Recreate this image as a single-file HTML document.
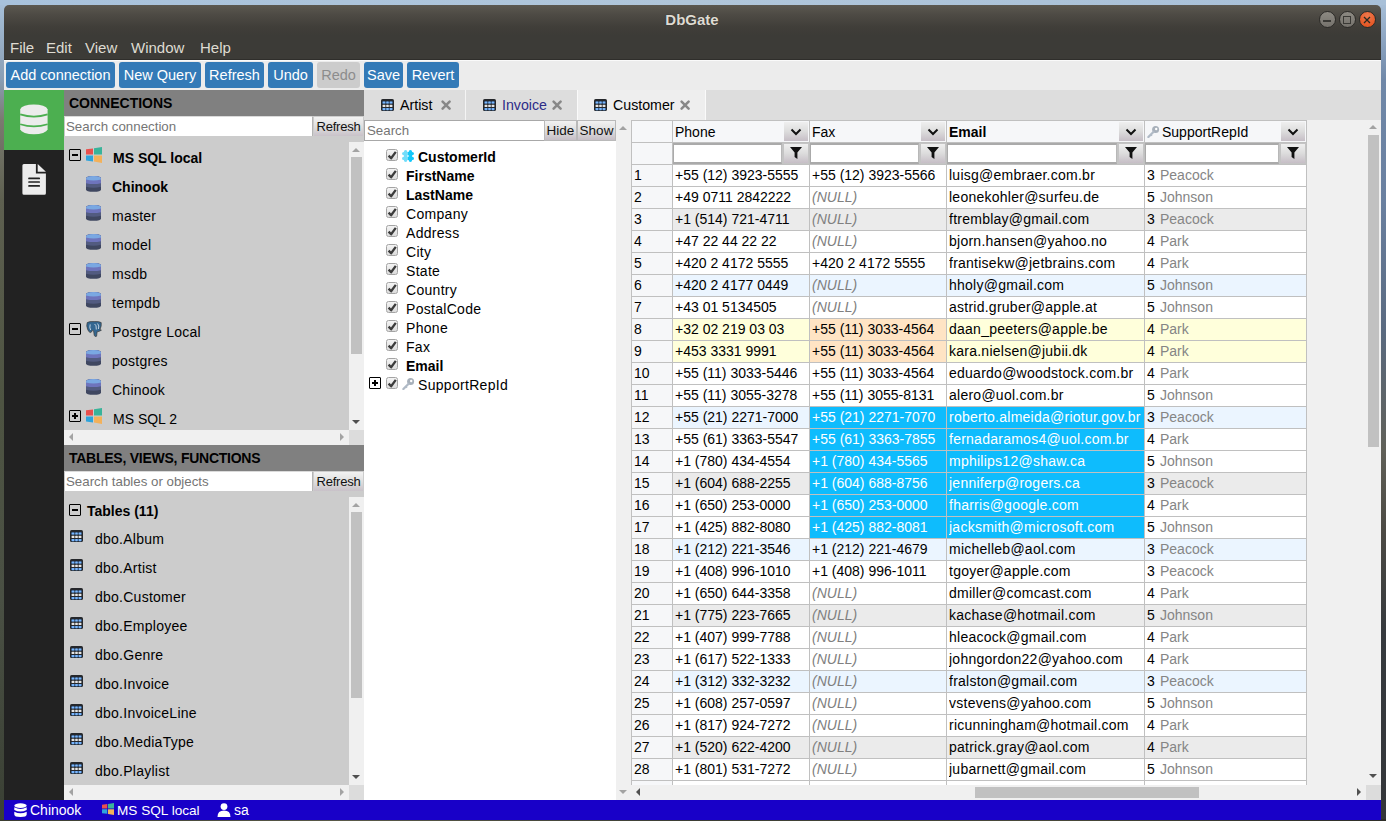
<!DOCTYPE html><html><head><meta charset="utf-8"><style>html,body{margin:0;padding:0;}body{width:1386px;height:821px;overflow:hidden;position:relative;font-family:"Liberation Sans", sans-serif;font-size:14px;background:linear-gradient(180deg,#a9c1da 0px,#9fb7cf 40px,#40463c 140px,#2f3428 500px,#34352c 821px);}div{box-sizing:content-box;}</style></head><body>
<div style="position:absolute;left:1381px;top:0px;width:5px;height:330px;background:linear-gradient(180deg,#a9c1da,#7088a8 80px,#6a80a0 200px,#5a6a80 330px);"></div>
<div style="position:absolute;left:1381px;top:330px;width:5px;height:491px;background:linear-gradient(180deg,#5a6a80,#606058 120px,#4c4a44 200px,#363a3e 300px,#34363a 491px);"></div>
<div style="position:absolute;left:0px;top:0px;width:4px;height:821px;background:linear-gradient(180deg,#a8c2dc 0,#a0b8d0 20px,#8a9eb4 80px,#7a7a70 120px,#5e6050 200px,#4e5442 400px,#4a5044 600px,#3a4034 821px);"></div>
<div style="position:absolute;left:0px;top:819px;width:1386px;height:2px;background:linear-gradient(90deg,#3a3c30,#5a5a48 25%,#3c3e34 50%,#4a4a3a 75%,#2e2e28);"></div>
<div style="position:absolute;left:0px;top:0px;width:1386px;height:5px;background:linear-gradient(90deg,#a8c2dc,#b0c6da 50%,#a8c0d8);"></div>
<div style="position:absolute;left:4px;top:5px;width:1377px;height:30px;background:linear-gradient(180deg,#5b5850 0px,#4d4a44 10px,#403e39 22px,#3c3b37 30px);border-radius:5px 5px 0 0;"></div>
<div style="position:absolute;left:-1px;top:10.04px;height:20px;line-height:20px;font-size:15px;font-weight:bold;color:#dfdbd2;white-space:nowrap;width:1386px;text-align:center;text-shadow:0 0 1px #222;" >DbGate</div>
<div style="position:absolute;left:1318.5px;top:11px;width:15px;height:15px;border-radius:50%;border:1px solid #2c2b28;background:linear-gradient(180deg,#8c8982,#75726c);"></div>
<div style="position:absolute;left:1338.5px;top:11px;width:15px;height:15px;border-radius:50%;border:1px solid #2c2b28;background:linear-gradient(180deg,#8c8982,#75726c);"></div>
<div style="position:absolute;left:1358.5px;top:11px;width:15px;height:15px;border-radius:50%;border:1px solid #2c2b28;background:radial-gradient(circle at 50% 25%,#f0784c,#e65a28 70%,#e0541e);"></div>
<div style="position:absolute;left:1323px;top:20px;width:8px;height:1.6px;background:#3a3935"></div>
<div style="position:absolute;left:1343px;top:16px;width:6px;height:6px;border:1.3px solid #3a3935"></div>
<svg width="10" height="10" style="position:absolute;left:1362px;top:15px"><path d="M2 2 L8 8 M8 2 L2 8" stroke="#2a2a20" stroke-width="1.3"/><circle cx="5" cy="5" r="1" fill="#2a2a20"/></svg>
<div style="position:absolute;left:4px;top:35px;width:1377px;height:25px;background:#3c3b37;"></div>
<div style="position:absolute;left:4px;top:59px;width:1377px;height:1px;background:#2f2e2b;"></div>
<div style="position:absolute;left:10px;top:37.84px;height:20px;line-height:20px;font-size:15px;font-weight:normal;color:#dfdbd2;white-space:nowrap;" >File</div>
<div style="position:absolute;left:46px;top:37.84px;height:20px;line-height:20px;font-size:15px;font-weight:normal;color:#dfdbd2;white-space:nowrap;" >Edit</div>
<div style="position:absolute;left:85px;top:37.84px;height:20px;line-height:20px;font-size:15px;font-weight:normal;color:#dfdbd2;white-space:nowrap;" >View</div>
<div style="position:absolute;left:131px;top:37.84px;height:20px;line-height:20px;font-size:15px;font-weight:normal;color:#dfdbd2;white-space:nowrap;" >Window</div>
<div style="position:absolute;left:200px;top:37.84px;height:20px;line-height:20px;font-size:15px;font-weight:normal;color:#dfdbd2;white-space:nowrap;" >Help</div>
<div style="position:absolute;left:4px;top:60px;width:1377px;height:30px;background:#ececec;border-top:1px solid #fafafa;height:29px;"></div>
<div style="position:absolute;left:6px;top:62px;width:109px;height:26px;background:#337ab7;border-radius:3px;"></div>
<div style="position:absolute;left:6px;top:65.01px;height:20px;line-height:20px;font-size:14.5px;font-weight:normal;color:#ffffff;white-space:nowrap;width:109px;text-align:center;" >Add connection</div>
<div style="position:absolute;left:119px;top:62px;width:82px;height:26px;background:#337ab7;border-radius:3px;"></div>
<div style="position:absolute;left:119px;top:65.01px;height:20px;line-height:20px;font-size:14.5px;font-weight:normal;color:#ffffff;white-space:nowrap;width:82px;text-align:center;" >New Query</div>
<div style="position:absolute;left:205px;top:62px;width:59px;height:26px;background:#337ab7;border-radius:3px;"></div>
<div style="position:absolute;left:205px;top:65.01px;height:20px;line-height:20px;font-size:14.5px;font-weight:normal;color:#ffffff;white-space:nowrap;width:59px;text-align:center;" >Refresh</div>
<div style="position:absolute;left:268px;top:62px;width:45px;height:26px;background:#337ab7;border-radius:3px;"></div>
<div style="position:absolute;left:268px;top:65.01px;height:20px;line-height:20px;font-size:14.5px;font-weight:normal;color:#ffffff;white-space:nowrap;width:45px;text-align:center;" >Undo</div>
<div style="position:absolute;left:317px;top:62px;width:43px;height:26px;background:#cccccc;border-radius:3px;"></div>
<div style="position:absolute;left:317px;top:65.01px;height:20px;line-height:20px;font-size:14.5px;font-weight:normal;color:#8c8c8c;white-space:nowrap;width:43px;text-align:center;" >Redo</div>
<div style="position:absolute;left:364px;top:62px;width:39px;height:26px;background:#337ab7;border-radius:3px;"></div>
<div style="position:absolute;left:364px;top:65.01px;height:20px;line-height:20px;font-size:14.5px;font-weight:normal;color:#ffffff;white-space:nowrap;width:39px;text-align:center;" >Save</div>
<div style="position:absolute;left:407px;top:62px;width:52px;height:26px;background:#337ab7;border-radius:3px;"></div>
<div style="position:absolute;left:407px;top:65.01px;height:20px;line-height:20px;font-size:14.5px;font-weight:normal;color:#ffffff;white-space:nowrap;width:52px;text-align:center;" >Revert</div>
<div style="position:absolute;left:4px;top:90px;width:1377px;height:710px;background:#ececec;"></div>
<div style="position:absolute;left:64px;top:90px;width:300px;height:710px;background:#cccccc;"></div>
<div style="position:absolute;left:4px;top:90px;width:60px;height:710px;background:#222222;"></div>
<div style="position:absolute;left:4px;top:90px;width:60px;height:60px;background:#4caf50;"></div>
<svg width="28" height="33" viewBox="0 0 28 33" style="position:absolute;left:20px;top:103px"><path d="M0.2 6.2 A13.8 5.4 0 0 1 27.6 6.2 L27.6 26.6 A13.8 5.4 0 0 1 0.2 26.6 Z" fill="#ececec"/><path d="M0.2 11.4 Q13.9 15.8 27.6 11.4" stroke="#4caf50" stroke-width="1.7" fill="none"/><path d="M0.2 21.2 Q13.9 25.6 27.6 21.2" stroke="#4caf50" stroke-width="1.7" fill="none"/></svg>
<svg width="26" height="33" viewBox="0 0 26 33" style="position:absolute;left:22px;top:164px"><path d="M0.4 1.5 Q0.4 0 1.9 0 L13.9 0 L13.9 9.6 L23.9 9.6 L23.9 29.3 Q23.9 30.8 22.4 30.8 L1.9 30.8 Q0.4 30.8 0.4 29.3 Z" fill="#ececec"/><path d="M15.7 0 L15.7 7.8 L23.9 7.8 Z" fill="#ececec"/><path d="M7 14.4 L17.2 14.4 M7 18 L17.2 18 M7 21.9 L17.2 21.9" stroke="#222" stroke-width="1.7" stroke-linecap="round"/></svg>
<div style="position:absolute;left:64px;top:90px;width:300px;height:26px;background:#808080;"></div>
<div style="position:absolute;left:69px;top:93.37px;height:20px;line-height:20px;font-size:14px;font-weight:bold;color:#000;white-space:nowrap;" >CONNECTIONS</div>
<div style="position:absolute;left:64px;top:116px;width:247px;height:19px;background:#fff;border:1px solid #b4b4b4;border-top-color:#dadada;border-left-color:#c8c8c8;"></div>
<div style="position:absolute;left:66px;top:116.60px;height:20px;line-height:20px;font-size:13.3px;font-weight:normal;color:#757575;white-space:nowrap;" >Search connection</div>
<div style="position:absolute;left:314px;top:117px;width:49px;height:20px;background:linear-gradient(180deg,#f2f2f2,#dedede 50%,#c6bec6);"></div>
<div style="position:absolute;left:314px;top:116.70px;height:20px;line-height:20px;font-size:13px;font-weight:normal;color:#111;white-space:nowrap;width:49px;text-align:center;letter-spacing:-0.2px;" >Refresh</div>
<div style="position:absolute;left:64px;top:136px;width:300px;height:294px;background:#cccccc;"></div>
<div style="position:absolute;left:69px;top:149px;width:10px;height:10px;border:1px solid #000;border-radius:1px;"><div style="position:absolute;left:2px;top:4px;width:6px;height:2px;background:#000"></div></div>
<svg width="16" height="16" viewBox="0 0 16 16" style="position:absolute;left:86px;top:147px"><path d="M0 2.2 L7 1.4 L7 7.4 L0 7.4 Z" fill="#e8504e"/><path d="M8 1.3 L16 0 L16 7.4 L8 7.4 Z" fill="#39b39a"/><path d="M0 8.4 L7 8.4 L7 14.4 L0 13.6 Z" fill="#2ea3db"/><path d="M8 8.4 L16 8.4 L16 16 L8 14.6 Z" fill="#f3b15a"/></svg>
<div style="position:absolute;left:113px;top:148.37px;height:20px;line-height:20px;font-size:14px;font-weight:bold;color:#000;white-space:nowrap;" >MS SQL local</div>
<svg width="15" height="16" viewBox="0 0 15 16" style="position:absolute;left:85.5px;top:176px"><path d="M0 2.6 Q0 0 7.5 0 Q15 0 15 2.6 L15 13.2 Q15 15.8 7.5 15.8 Q0 15.8 0 13.2 Z" fill="#3f4760"/><path d="M0 2.6 Q0 0 7.5 0 Q15 0 15 2.6 L15 10.8 Q7.5 12.6 0 10.8 Z" fill="#525b80"/><path d="M0 2.6 Q0 0 7.5 0 Q15 0 15 2.6 L15 7.2 Q7.5 9 0 7.2 Z" fill="#6e74bc"/><path d="M0 2.6 Q0 0 7.5 0 Q15 0 15 2.6 L15 3.6 Q7.5 5.6 0 3.6 Z" fill="#7aa8e2"/></svg>
<div style="position:absolute;left:112px;top:177.37px;height:20px;line-height:20px;font-size:14px;font-weight:bold;color:#000;white-space:nowrap;" >Chinook</div>
<svg width="15" height="16" viewBox="0 0 15 16" style="position:absolute;left:85.5px;top:205px"><path d="M0 2.6 Q0 0 7.5 0 Q15 0 15 2.6 L15 13.2 Q15 15.8 7.5 15.8 Q0 15.8 0 13.2 Z" fill="#3f4760"/><path d="M0 2.6 Q0 0 7.5 0 Q15 0 15 2.6 L15 10.8 Q7.5 12.6 0 10.8 Z" fill="#525b80"/><path d="M0 2.6 Q0 0 7.5 0 Q15 0 15 2.6 L15 7.2 Q7.5 9 0 7.2 Z" fill="#6e74bc"/><path d="M0 2.6 Q0 0 7.5 0 Q15 0 15 2.6 L15 3.6 Q7.5 5.6 0 3.6 Z" fill="#7aa8e2"/></svg>
<div style="position:absolute;left:112px;top:206.37px;height:20px;line-height:20px;font-size:14px;font-weight:normal;color:#000;white-space:nowrap;letter-spacing:0.25px;" >master</div>
<svg width="15" height="16" viewBox="0 0 15 16" style="position:absolute;left:85.5px;top:234px"><path d="M0 2.6 Q0 0 7.5 0 Q15 0 15 2.6 L15 13.2 Q15 15.8 7.5 15.8 Q0 15.8 0 13.2 Z" fill="#3f4760"/><path d="M0 2.6 Q0 0 7.5 0 Q15 0 15 2.6 L15 10.8 Q7.5 12.6 0 10.8 Z" fill="#525b80"/><path d="M0 2.6 Q0 0 7.5 0 Q15 0 15 2.6 L15 7.2 Q7.5 9 0 7.2 Z" fill="#6e74bc"/><path d="M0 2.6 Q0 0 7.5 0 Q15 0 15 2.6 L15 3.6 Q7.5 5.6 0 3.6 Z" fill="#7aa8e2"/></svg>
<div style="position:absolute;left:112px;top:235.37px;height:20px;line-height:20px;font-size:14px;font-weight:normal;color:#000;white-space:nowrap;letter-spacing:0.25px;" >model</div>
<svg width="15" height="16" viewBox="0 0 15 16" style="position:absolute;left:85.5px;top:263px"><path d="M0 2.6 Q0 0 7.5 0 Q15 0 15 2.6 L15 13.2 Q15 15.8 7.5 15.8 Q0 15.8 0 13.2 Z" fill="#3f4760"/><path d="M0 2.6 Q0 0 7.5 0 Q15 0 15 2.6 L15 10.8 Q7.5 12.6 0 10.8 Z" fill="#525b80"/><path d="M0 2.6 Q0 0 7.5 0 Q15 0 15 2.6 L15 7.2 Q7.5 9 0 7.2 Z" fill="#6e74bc"/><path d="M0 2.6 Q0 0 7.5 0 Q15 0 15 2.6 L15 3.6 Q7.5 5.6 0 3.6 Z" fill="#7aa8e2"/></svg>
<div style="position:absolute;left:112px;top:264.37px;height:20px;line-height:20px;font-size:14px;font-weight:normal;color:#000;white-space:nowrap;letter-spacing:0.25px;" >msdb</div>
<svg width="15" height="16" viewBox="0 0 15 16" style="position:absolute;left:85.5px;top:292px"><path d="M0 2.6 Q0 0 7.5 0 Q15 0 15 2.6 L15 13.2 Q15 15.8 7.5 15.8 Q0 15.8 0 13.2 Z" fill="#3f4760"/><path d="M0 2.6 Q0 0 7.5 0 Q15 0 15 2.6 L15 10.8 Q7.5 12.6 0 10.8 Z" fill="#525b80"/><path d="M0 2.6 Q0 0 7.5 0 Q15 0 15 2.6 L15 7.2 Q7.5 9 0 7.2 Z" fill="#6e74bc"/><path d="M0 2.6 Q0 0 7.5 0 Q15 0 15 2.6 L15 3.6 Q7.5 5.6 0 3.6 Z" fill="#7aa8e2"/></svg>
<div style="position:absolute;left:112px;top:293.37px;height:20px;line-height:20px;font-size:14px;font-weight:normal;color:#000;white-space:nowrap;letter-spacing:0.25px;" >tempdb</div>
<div style="position:absolute;left:69px;top:323px;width:10px;height:10px;border:1px solid #000;border-radius:1px;"><div style="position:absolute;left:2px;top:4px;width:6px;height:2px;background:#000"></div></div>
<svg width="17" height="17" viewBox="0 0 17 17" style="position:absolute;left:86px;top:321px"><path d="M1.2 1.6 Q0.2 4.5 1.5 8 Q2.5 11 4.2 11.6 Q5.8 11.6 6.3 9.3 L7.6 9.8 L8.2 14.2 Q9 16.3 10.6 15.2 L11.1 10.8 Q13.2 10.6 15.4 9.2 L14 8.6 Q15.8 4.5 15.2 1.6 Q13 0.2 8.2 0.6 Q3.2 0.2 1.2 1.6 Z" fill="#336791" stroke="#3a3a3a" stroke-width="0.7"/><path d="M4.2 3.4 Q3.3 6.5 4.6 9 M8.6 3 Q10.6 3.8 10.3 8.5 M11.6 2.6 Q13.6 4.6 12.4 8" stroke="#e4ecf4" stroke-width="0.8" fill="none"/></svg>
<div style="position:absolute;left:112px;top:322.37px;height:20px;line-height:20px;font-size:14px;font-weight:normal;color:#000;white-space:nowrap;letter-spacing:0.25px;" >Postgre Local</div>
<svg width="15" height="16" viewBox="0 0 15 16" style="position:absolute;left:85.5px;top:350px"><path d="M0 2.6 Q0 0 7.5 0 Q15 0 15 2.6 L15 13.2 Q15 15.8 7.5 15.8 Q0 15.8 0 13.2 Z" fill="#3f4760"/><path d="M0 2.6 Q0 0 7.5 0 Q15 0 15 2.6 L15 10.8 Q7.5 12.6 0 10.8 Z" fill="#525b80"/><path d="M0 2.6 Q0 0 7.5 0 Q15 0 15 2.6 L15 7.2 Q7.5 9 0 7.2 Z" fill="#6e74bc"/><path d="M0 2.6 Q0 0 7.5 0 Q15 0 15 2.6 L15 3.6 Q7.5 5.6 0 3.6 Z" fill="#7aa8e2"/></svg>
<div style="position:absolute;left:112px;top:351.37px;height:20px;line-height:20px;font-size:14px;font-weight:normal;color:#000;white-space:nowrap;letter-spacing:0.25px;" >postgres</div>
<svg width="15" height="16" viewBox="0 0 15 16" style="position:absolute;left:85.5px;top:379px"><path d="M0 2.6 Q0 0 7.5 0 Q15 0 15 2.6 L15 13.2 Q15 15.8 7.5 15.8 Q0 15.8 0 13.2 Z" fill="#3f4760"/><path d="M0 2.6 Q0 0 7.5 0 Q15 0 15 2.6 L15 10.8 Q7.5 12.6 0 10.8 Z" fill="#525b80"/><path d="M0 2.6 Q0 0 7.5 0 Q15 0 15 2.6 L15 7.2 Q7.5 9 0 7.2 Z" fill="#6e74bc"/><path d="M0 2.6 Q0 0 7.5 0 Q15 0 15 2.6 L15 3.6 Q7.5 5.6 0 3.6 Z" fill="#7aa8e2"/></svg>
<div style="position:absolute;left:112px;top:380.37px;height:20px;line-height:20px;font-size:14px;font-weight:normal;color:#000;white-space:nowrap;letter-spacing:0.25px;" >Chinook</div>
<div style="position:absolute;left:69px;top:410px;width:10px;height:10px;border:1px solid #000;border-radius:1px;"><div style="position:absolute;left:2px;top:4px;width:6px;height:2px;background:#000"></div><div style="position:absolute;left:4px;top:2px;width:2px;height:6px;background:#000"></div></div>
<svg width="16" height="16" viewBox="0 0 16 16" style="position:absolute;left:86px;top:408px"><path d="M0 2.2 L7 1.4 L7 7.4 L0 7.4 Z" fill="#e8504e"/><path d="M8 1.3 L16 0 L16 7.4 L8 7.4 Z" fill="#39b39a"/><path d="M0 8.4 L7 8.4 L7 14.4 L0 13.6 Z" fill="#2ea3db"/><path d="M8 8.4 L16 8.4 L16 16 L8 14.6 Z" fill="#f3b15a"/></svg>
<div style="position:absolute;left:113px;top:409.37px;height:20px;line-height:20px;font-size:14px;font-weight:normal;color:#000;white-space:nowrap;" >MS SQL 2</div>
<div style="position:absolute;left:349px;top:142px;width:15px;height:288px;background:#f0f0f0;"></div>
<div style="position:absolute;left:351px;top:157px;width:11px;height:197px;background:#c1c1c1;"></div>
<div style="position:absolute;left:352px;top:148px;width:0px;height:0px;border-left:4px solid transparent;border-right:4px solid transparent;border-bottom:4px solid #a3a3a3;"></div>
<div style="position:absolute;left:352px;top:420px;width:0px;height:0px;border-left:4px solid transparent;border-right:4px solid transparent;border-top:4px solid #505050;"></div>
<div style="position:absolute;left:64px;top:430px;width:285px;height:15px;background:#f0f0f0;"></div>
<div style="position:absolute;left:349px;top:430px;width:15px;height:15px;background:#dcdcdc;"></div>
<div style="position:absolute;left:69px;top:433px;width:0px;height:0px;border-top:4px solid transparent;border-bottom:4px solid transparent;border-right:4px solid #a3a3a3;"></div>
<div style="position:absolute;left:340px;top:433px;width:0px;height:0px;border-top:4px solid transparent;border-bottom:4px solid transparent;border-left:4px solid #a3a3a3;"></div>
<div style="position:absolute;left:64px;top:445px;width:300px;height:26px;background:#808080;"></div>
<div style="position:absolute;left:69px;top:448.37px;height:20px;line-height:20px;font-size:14px;font-weight:bold;color:#000;white-space:nowrap;letter-spacing:-0.25px;" >TABLES, VIEWS, FUNCTIONS</div>
<div style="position:absolute;left:64px;top:471px;width:247px;height:19px;background:#fff;border:1px solid #b4b4b4;border-top-color:#dadada;border-left-color:#c8c8c8;"></div>
<div style="position:absolute;left:66px;top:471.60px;height:20px;line-height:20px;font-size:13.3px;font-weight:normal;color:#757575;white-space:nowrap;" >Search tables or objects</div>
<div style="position:absolute;left:314px;top:472px;width:49px;height:20px;background:linear-gradient(180deg,#f2f2f2,#dedede 50%,#c6bec6);"></div>
<div style="position:absolute;left:314px;top:471.70px;height:20px;line-height:20px;font-size:13px;font-weight:normal;color:#111;white-space:nowrap;width:49px;text-align:center;letter-spacing:-0.2px;" >Refresh</div>
<div style="position:absolute;left:64px;top:491px;width:300px;height:294px;background:#cccccc;"></div>
<div style="position:absolute;left:69px;top:504px;width:10px;height:10px;border:1px solid #000;border-radius:1px;"><div style="position:absolute;left:2px;top:4px;width:6px;height:2px;background:#000"></div></div>
<div style="position:absolute;left:87px;top:501.37px;height:20px;line-height:20px;font-size:14px;font-weight:bold;color:#000;white-space:nowrap;" >Tables (11)</div>
<svg width="13" height="12" viewBox="0 0 13 12" style="position:absolute;left:70px;top:530px"><rect x="0" y="0" width="13" height="12" rx="1.6" fill="#25272b"/><rect x="1" y="2.4" width="11" height="2.2" fill="#34557f"/><rect x="1.8" y="2.4" width="2.4" height="2.2" rx="0.6" fill="#7ab8ff"/><rect x="5.3" y="2.4" width="2.4" height="2.2" rx="0.6" fill="#7ab8ff"/><rect x="8.8" y="2.4" width="2.4" height="2.2" rx="0.6" fill="#7ab8ff"/><rect x="1" y="5.8" width="11" height="2.2" fill="#5c5c5c"/><rect x="1.8" y="5.8" width="2.4" height="2.2" rx="0.6" fill="#e6e6e6"/><rect x="5.3" y="5.8" width="2.4" height="2.2" rx="0.6" fill="#e6e6e6"/><rect x="8.8" y="5.8" width="2.4" height="2.2" rx="0.6" fill="#e6e6e6"/><rect x="1" y="9.0" width="11" height="2.2" fill="#34557f"/><rect x="1.8" y="9.0" width="2.4" height="2.2" rx="0.6" fill="#7ab8ff"/><rect x="5.3" y="9.0" width="2.4" height="2.2" rx="0.6" fill="#7ab8ff"/><rect x="8.8" y="9.0" width="2.4" height="2.2" rx="0.6" fill="#7ab8ff"/></svg>
<div style="position:absolute;left:95px;top:529.37px;height:20px;line-height:20px;font-size:14px;font-weight:normal;color:#000;white-space:nowrap;letter-spacing:0.25px;" >dbo.Album</div>
<svg width="13" height="12" viewBox="0 0 13 12" style="position:absolute;left:70px;top:559px"><rect x="0" y="0" width="13" height="12" rx="1.6" fill="#25272b"/><rect x="1" y="2.4" width="11" height="2.2" fill="#34557f"/><rect x="1.8" y="2.4" width="2.4" height="2.2" rx="0.6" fill="#7ab8ff"/><rect x="5.3" y="2.4" width="2.4" height="2.2" rx="0.6" fill="#7ab8ff"/><rect x="8.8" y="2.4" width="2.4" height="2.2" rx="0.6" fill="#7ab8ff"/><rect x="1" y="5.8" width="11" height="2.2" fill="#5c5c5c"/><rect x="1.8" y="5.8" width="2.4" height="2.2" rx="0.6" fill="#e6e6e6"/><rect x="5.3" y="5.8" width="2.4" height="2.2" rx="0.6" fill="#e6e6e6"/><rect x="8.8" y="5.8" width="2.4" height="2.2" rx="0.6" fill="#e6e6e6"/><rect x="1" y="9.0" width="11" height="2.2" fill="#34557f"/><rect x="1.8" y="9.0" width="2.4" height="2.2" rx="0.6" fill="#7ab8ff"/><rect x="5.3" y="9.0" width="2.4" height="2.2" rx="0.6" fill="#7ab8ff"/><rect x="8.8" y="9.0" width="2.4" height="2.2" rx="0.6" fill="#7ab8ff"/></svg>
<div style="position:absolute;left:95px;top:558.37px;height:20px;line-height:20px;font-size:14px;font-weight:normal;color:#000;white-space:nowrap;letter-spacing:0.25px;" >dbo.Artist</div>
<svg width="13" height="12" viewBox="0 0 13 12" style="position:absolute;left:70px;top:588px"><rect x="0" y="0" width="13" height="12" rx="1.6" fill="#25272b"/><rect x="1" y="2.4" width="11" height="2.2" fill="#34557f"/><rect x="1.8" y="2.4" width="2.4" height="2.2" rx="0.6" fill="#7ab8ff"/><rect x="5.3" y="2.4" width="2.4" height="2.2" rx="0.6" fill="#7ab8ff"/><rect x="8.8" y="2.4" width="2.4" height="2.2" rx="0.6" fill="#7ab8ff"/><rect x="1" y="5.8" width="11" height="2.2" fill="#5c5c5c"/><rect x="1.8" y="5.8" width="2.4" height="2.2" rx="0.6" fill="#e6e6e6"/><rect x="5.3" y="5.8" width="2.4" height="2.2" rx="0.6" fill="#e6e6e6"/><rect x="8.8" y="5.8" width="2.4" height="2.2" rx="0.6" fill="#e6e6e6"/><rect x="1" y="9.0" width="11" height="2.2" fill="#34557f"/><rect x="1.8" y="9.0" width="2.4" height="2.2" rx="0.6" fill="#7ab8ff"/><rect x="5.3" y="9.0" width="2.4" height="2.2" rx="0.6" fill="#7ab8ff"/><rect x="8.8" y="9.0" width="2.4" height="2.2" rx="0.6" fill="#7ab8ff"/></svg>
<div style="position:absolute;left:95px;top:587.37px;height:20px;line-height:20px;font-size:14px;font-weight:normal;color:#000;white-space:nowrap;letter-spacing:0.25px;" >dbo.Customer</div>
<svg width="13" height="12" viewBox="0 0 13 12" style="position:absolute;left:70px;top:617px"><rect x="0" y="0" width="13" height="12" rx="1.6" fill="#25272b"/><rect x="1" y="2.4" width="11" height="2.2" fill="#34557f"/><rect x="1.8" y="2.4" width="2.4" height="2.2" rx="0.6" fill="#7ab8ff"/><rect x="5.3" y="2.4" width="2.4" height="2.2" rx="0.6" fill="#7ab8ff"/><rect x="8.8" y="2.4" width="2.4" height="2.2" rx="0.6" fill="#7ab8ff"/><rect x="1" y="5.8" width="11" height="2.2" fill="#5c5c5c"/><rect x="1.8" y="5.8" width="2.4" height="2.2" rx="0.6" fill="#e6e6e6"/><rect x="5.3" y="5.8" width="2.4" height="2.2" rx="0.6" fill="#e6e6e6"/><rect x="8.8" y="5.8" width="2.4" height="2.2" rx="0.6" fill="#e6e6e6"/><rect x="1" y="9.0" width="11" height="2.2" fill="#34557f"/><rect x="1.8" y="9.0" width="2.4" height="2.2" rx="0.6" fill="#7ab8ff"/><rect x="5.3" y="9.0" width="2.4" height="2.2" rx="0.6" fill="#7ab8ff"/><rect x="8.8" y="9.0" width="2.4" height="2.2" rx="0.6" fill="#7ab8ff"/></svg>
<div style="position:absolute;left:95px;top:616.37px;height:20px;line-height:20px;font-size:14px;font-weight:normal;color:#000;white-space:nowrap;letter-spacing:0.25px;" >dbo.Employee</div>
<svg width="13" height="12" viewBox="0 0 13 12" style="position:absolute;left:70px;top:646px"><rect x="0" y="0" width="13" height="12" rx="1.6" fill="#25272b"/><rect x="1" y="2.4" width="11" height="2.2" fill="#34557f"/><rect x="1.8" y="2.4" width="2.4" height="2.2" rx="0.6" fill="#7ab8ff"/><rect x="5.3" y="2.4" width="2.4" height="2.2" rx="0.6" fill="#7ab8ff"/><rect x="8.8" y="2.4" width="2.4" height="2.2" rx="0.6" fill="#7ab8ff"/><rect x="1" y="5.8" width="11" height="2.2" fill="#5c5c5c"/><rect x="1.8" y="5.8" width="2.4" height="2.2" rx="0.6" fill="#e6e6e6"/><rect x="5.3" y="5.8" width="2.4" height="2.2" rx="0.6" fill="#e6e6e6"/><rect x="8.8" y="5.8" width="2.4" height="2.2" rx="0.6" fill="#e6e6e6"/><rect x="1" y="9.0" width="11" height="2.2" fill="#34557f"/><rect x="1.8" y="9.0" width="2.4" height="2.2" rx="0.6" fill="#7ab8ff"/><rect x="5.3" y="9.0" width="2.4" height="2.2" rx="0.6" fill="#7ab8ff"/><rect x="8.8" y="9.0" width="2.4" height="2.2" rx="0.6" fill="#7ab8ff"/></svg>
<div style="position:absolute;left:95px;top:645.37px;height:20px;line-height:20px;font-size:14px;font-weight:normal;color:#000;white-space:nowrap;letter-spacing:0.25px;" >dbo.Genre</div>
<svg width="13" height="12" viewBox="0 0 13 12" style="position:absolute;left:70px;top:675px"><rect x="0" y="0" width="13" height="12" rx="1.6" fill="#25272b"/><rect x="1" y="2.4" width="11" height="2.2" fill="#34557f"/><rect x="1.8" y="2.4" width="2.4" height="2.2" rx="0.6" fill="#7ab8ff"/><rect x="5.3" y="2.4" width="2.4" height="2.2" rx="0.6" fill="#7ab8ff"/><rect x="8.8" y="2.4" width="2.4" height="2.2" rx="0.6" fill="#7ab8ff"/><rect x="1" y="5.8" width="11" height="2.2" fill="#5c5c5c"/><rect x="1.8" y="5.8" width="2.4" height="2.2" rx="0.6" fill="#e6e6e6"/><rect x="5.3" y="5.8" width="2.4" height="2.2" rx="0.6" fill="#e6e6e6"/><rect x="8.8" y="5.8" width="2.4" height="2.2" rx="0.6" fill="#e6e6e6"/><rect x="1" y="9.0" width="11" height="2.2" fill="#34557f"/><rect x="1.8" y="9.0" width="2.4" height="2.2" rx="0.6" fill="#7ab8ff"/><rect x="5.3" y="9.0" width="2.4" height="2.2" rx="0.6" fill="#7ab8ff"/><rect x="8.8" y="9.0" width="2.4" height="2.2" rx="0.6" fill="#7ab8ff"/></svg>
<div style="position:absolute;left:95px;top:674.37px;height:20px;line-height:20px;font-size:14px;font-weight:normal;color:#000;white-space:nowrap;letter-spacing:0.25px;" >dbo.Invoice</div>
<svg width="13" height="12" viewBox="0 0 13 12" style="position:absolute;left:70px;top:704px"><rect x="0" y="0" width="13" height="12" rx="1.6" fill="#25272b"/><rect x="1" y="2.4" width="11" height="2.2" fill="#34557f"/><rect x="1.8" y="2.4" width="2.4" height="2.2" rx="0.6" fill="#7ab8ff"/><rect x="5.3" y="2.4" width="2.4" height="2.2" rx="0.6" fill="#7ab8ff"/><rect x="8.8" y="2.4" width="2.4" height="2.2" rx="0.6" fill="#7ab8ff"/><rect x="1" y="5.8" width="11" height="2.2" fill="#5c5c5c"/><rect x="1.8" y="5.8" width="2.4" height="2.2" rx="0.6" fill="#e6e6e6"/><rect x="5.3" y="5.8" width="2.4" height="2.2" rx="0.6" fill="#e6e6e6"/><rect x="8.8" y="5.8" width="2.4" height="2.2" rx="0.6" fill="#e6e6e6"/><rect x="1" y="9.0" width="11" height="2.2" fill="#34557f"/><rect x="1.8" y="9.0" width="2.4" height="2.2" rx="0.6" fill="#7ab8ff"/><rect x="5.3" y="9.0" width="2.4" height="2.2" rx="0.6" fill="#7ab8ff"/><rect x="8.8" y="9.0" width="2.4" height="2.2" rx="0.6" fill="#7ab8ff"/></svg>
<div style="position:absolute;left:95px;top:703.37px;height:20px;line-height:20px;font-size:14px;font-weight:normal;color:#000;white-space:nowrap;letter-spacing:0.25px;" >dbo.InvoiceLine</div>
<svg width="13" height="12" viewBox="0 0 13 12" style="position:absolute;left:70px;top:733px"><rect x="0" y="0" width="13" height="12" rx="1.6" fill="#25272b"/><rect x="1" y="2.4" width="11" height="2.2" fill="#34557f"/><rect x="1.8" y="2.4" width="2.4" height="2.2" rx="0.6" fill="#7ab8ff"/><rect x="5.3" y="2.4" width="2.4" height="2.2" rx="0.6" fill="#7ab8ff"/><rect x="8.8" y="2.4" width="2.4" height="2.2" rx="0.6" fill="#7ab8ff"/><rect x="1" y="5.8" width="11" height="2.2" fill="#5c5c5c"/><rect x="1.8" y="5.8" width="2.4" height="2.2" rx="0.6" fill="#e6e6e6"/><rect x="5.3" y="5.8" width="2.4" height="2.2" rx="0.6" fill="#e6e6e6"/><rect x="8.8" y="5.8" width="2.4" height="2.2" rx="0.6" fill="#e6e6e6"/><rect x="1" y="9.0" width="11" height="2.2" fill="#34557f"/><rect x="1.8" y="9.0" width="2.4" height="2.2" rx="0.6" fill="#7ab8ff"/><rect x="5.3" y="9.0" width="2.4" height="2.2" rx="0.6" fill="#7ab8ff"/><rect x="8.8" y="9.0" width="2.4" height="2.2" rx="0.6" fill="#7ab8ff"/></svg>
<div style="position:absolute;left:95px;top:732.37px;height:20px;line-height:20px;font-size:14px;font-weight:normal;color:#000;white-space:nowrap;letter-spacing:0.25px;" >dbo.MediaType</div>
<svg width="13" height="12" viewBox="0 0 13 12" style="position:absolute;left:70px;top:762px"><rect x="0" y="0" width="13" height="12" rx="1.6" fill="#25272b"/><rect x="1" y="2.4" width="11" height="2.2" fill="#34557f"/><rect x="1.8" y="2.4" width="2.4" height="2.2" rx="0.6" fill="#7ab8ff"/><rect x="5.3" y="2.4" width="2.4" height="2.2" rx="0.6" fill="#7ab8ff"/><rect x="8.8" y="2.4" width="2.4" height="2.2" rx="0.6" fill="#7ab8ff"/><rect x="1" y="5.8" width="11" height="2.2" fill="#5c5c5c"/><rect x="1.8" y="5.8" width="2.4" height="2.2" rx="0.6" fill="#e6e6e6"/><rect x="5.3" y="5.8" width="2.4" height="2.2" rx="0.6" fill="#e6e6e6"/><rect x="8.8" y="5.8" width="2.4" height="2.2" rx="0.6" fill="#e6e6e6"/><rect x="1" y="9.0" width="11" height="2.2" fill="#34557f"/><rect x="1.8" y="9.0" width="2.4" height="2.2" rx="0.6" fill="#7ab8ff"/><rect x="5.3" y="9.0" width="2.4" height="2.2" rx="0.6" fill="#7ab8ff"/><rect x="8.8" y="9.0" width="2.4" height="2.2" rx="0.6" fill="#7ab8ff"/></svg>
<div style="position:absolute;left:95px;top:761.37px;height:20px;line-height:20px;font-size:14px;font-weight:normal;color:#000;white-space:nowrap;letter-spacing:0.25px;" >dbo.Playlist</div>
<div style="position:absolute;left:349px;top:497px;width:15px;height:288px;background:#f0f0f0;"></div>
<div style="position:absolute;left:351px;top:512px;width:11px;height:186px;background:#c1c1c1;"></div>
<div style="position:absolute;left:352px;top:503px;width:0px;height:0px;border-left:4px solid transparent;border-right:4px solid transparent;border-bottom:4px solid #a3a3a3;"></div>
<div style="position:absolute;left:352px;top:775px;width:0px;height:0px;border-left:4px solid transparent;border-right:4px solid transparent;border-top:4px solid #505050;"></div>
<div style="position:absolute;left:64px;top:785px;width:285px;height:15px;background:#f0f0f0;"></div>
<div style="position:absolute;left:349px;top:785px;width:15px;height:15px;background:#dcdcdc;"></div>
<div style="position:absolute;left:69px;top:788px;width:0px;height:0px;border-top:4px solid transparent;border-bottom:4px solid transparent;border-right:4px solid #a3a3a3;"></div>
<div style="position:absolute;left:340px;top:788px;width:0px;height:0px;border-top:4px solid transparent;border-bottom:4px solid transparent;border-left:4px solid #a3a3a3;"></div>
<div style="position:absolute;left:364px;top:90px;width:1017px;height:30px;background:#dddddd;"></div>
<div style="position:absolute;left:364px;top:90px;width:101px;height:30px;background:#dddddd;"></div>
<svg width="13" height="12" viewBox="0 0 13 12" style="position:absolute;left:381px;top:99px"><rect x="0" y="0" width="13" height="12" rx="1.6" fill="#25272b"/><rect x="1" y="2.4" width="11" height="2.2" fill="#34557f"/><rect x="1.8" y="2.4" width="2.4" height="2.2" rx="0.6" fill="#7ab8ff"/><rect x="5.3" y="2.4" width="2.4" height="2.2" rx="0.6" fill="#7ab8ff"/><rect x="8.8" y="2.4" width="2.4" height="2.2" rx="0.6" fill="#7ab8ff"/><rect x="1" y="5.8" width="11" height="2.2" fill="#5c5c5c"/><rect x="1.8" y="5.8" width="2.4" height="2.2" rx="0.6" fill="#e6e6e6"/><rect x="5.3" y="5.8" width="2.4" height="2.2" rx="0.6" fill="#e6e6e6"/><rect x="8.8" y="5.8" width="2.4" height="2.2" rx="0.6" fill="#e6e6e6"/><rect x="1" y="9.0" width="11" height="2.2" fill="#34557f"/><rect x="1.8" y="9.0" width="2.4" height="2.2" rx="0.6" fill="#7ab8ff"/><rect x="5.3" y="9.0" width="2.4" height="2.2" rx="0.6" fill="#7ab8ff"/><rect x="8.8" y="9.0" width="2.4" height="2.2" rx="0.6" fill="#7ab8ff"/></svg>
<div style="position:absolute;left:400px;top:95.31px;height:20px;line-height:20px;font-size:14.2px;font-weight:normal;color:#000;white-space:nowrap;" >Artist</div>
<div style="position:absolute;left:466px;top:90px;width:111px;height:30px;background:#dddddd;"></div>
<svg width="13" height="12" viewBox="0 0 13 12" style="position:absolute;left:483px;top:99px"><rect x="0" y="0" width="13" height="12" rx="1.6" fill="#25272b"/><rect x="1" y="2.4" width="11" height="2.2" fill="#34557f"/><rect x="1.8" y="2.4" width="2.4" height="2.2" rx="0.6" fill="#7ab8ff"/><rect x="5.3" y="2.4" width="2.4" height="2.2" rx="0.6" fill="#7ab8ff"/><rect x="8.8" y="2.4" width="2.4" height="2.2" rx="0.6" fill="#7ab8ff"/><rect x="1" y="5.8" width="11" height="2.2" fill="#5c5c5c"/><rect x="1.8" y="5.8" width="2.4" height="2.2" rx="0.6" fill="#e6e6e6"/><rect x="5.3" y="5.8" width="2.4" height="2.2" rx="0.6" fill="#e6e6e6"/><rect x="8.8" y="5.8" width="2.4" height="2.2" rx="0.6" fill="#e6e6e6"/><rect x="1" y="9.0" width="11" height="2.2" fill="#34557f"/><rect x="1.8" y="9.0" width="2.4" height="2.2" rx="0.6" fill="#7ab8ff"/><rect x="5.3" y="9.0" width="2.4" height="2.2" rx="0.6" fill="#7ab8ff"/><rect x="8.8" y="9.0" width="2.4" height="2.2" rx="0.6" fill="#7ab8ff"/></svg>
<div style="position:absolute;left:502px;top:95.31px;height:20px;line-height:20px;font-size:14.2px;font-weight:normal;color:#2e2c88;white-space:nowrap;" >Invoice</div>
<div style="position:absolute;left:577px;top:90px;width:128px;height:30px;background:#eeeeee;"></div>
<svg width="13" height="12" viewBox="0 0 13 12" style="position:absolute;left:594px;top:99px"><rect x="0" y="0" width="13" height="12" rx="1.6" fill="#25272b"/><rect x="1" y="2.4" width="11" height="2.2" fill="#34557f"/><rect x="1.8" y="2.4" width="2.4" height="2.2" rx="0.6" fill="#7ab8ff"/><rect x="5.3" y="2.4" width="2.4" height="2.2" rx="0.6" fill="#7ab8ff"/><rect x="8.8" y="2.4" width="2.4" height="2.2" rx="0.6" fill="#7ab8ff"/><rect x="1" y="5.8" width="11" height="2.2" fill="#5c5c5c"/><rect x="1.8" y="5.8" width="2.4" height="2.2" rx="0.6" fill="#e6e6e6"/><rect x="5.3" y="5.8" width="2.4" height="2.2" rx="0.6" fill="#e6e6e6"/><rect x="8.8" y="5.8" width="2.4" height="2.2" rx="0.6" fill="#e6e6e6"/><rect x="1" y="9.0" width="11" height="2.2" fill="#34557f"/><rect x="1.8" y="9.0" width="2.4" height="2.2" rx="0.6" fill="#7ab8ff"/><rect x="5.3" y="9.0" width="2.4" height="2.2" rx="0.6" fill="#7ab8ff"/><rect x="8.8" y="9.0" width="2.4" height="2.2" rx="0.6" fill="#7ab8ff"/></svg>
<div style="position:absolute;left:613px;top:95.31px;height:20px;line-height:20px;font-size:14.2px;font-weight:normal;color:#000;white-space:nowrap;" >Customer</div>
<svg width="11" height="11" viewBox="0 0 11 11" style="position:absolute;left:441px;top:100px"><path d="M1.6 1.6 L8.6 8.6 M8.6 1.6 L1.6 8.6" stroke="#888" stroke-width="2.5" stroke-linecap="round"/></svg>
<svg width="11" height="11" viewBox="0 0 11 11" style="position:absolute;left:552px;top:100px"><path d="M1.6 1.6 L8.6 8.6 M8.6 1.6 L1.6 8.6" stroke="#888" stroke-width="2.5" stroke-linecap="round"/></svg>
<svg width="11" height="11" viewBox="0 0 11 11" style="position:absolute;left:680px;top:100px"><path d="M1.6 1.6 L8.6 8.6 M8.6 1.6 L1.6 8.6" stroke="#888" stroke-width="2.5" stroke-linecap="round"/></svg>
<div style="position:absolute;left:465px;top:90px;width:1px;height:30px;background:#f4f4f4;"></div>
<div style="position:absolute;left:705px;top:90px;width:1px;height:30px;background:#fafafa;"></div>
<div style="position:absolute;left:577px;top:90px;width:1px;height:30px;background:#fafafa;"></div>
<div style="position:absolute;left:364px;top:120px;width:252px;height:680px;background:#ffffff;"></div>
<div style="position:absolute;left:364px;top:120px;width:179px;height:19px;background:#fff;border:1px solid #a8a8a8;"></div>
<div style="position:absolute;left:367px;top:120.60px;height:20px;line-height:20px;font-size:13.3px;font-weight:normal;color:#757575;white-space:nowrap;" >Search</div>
<div style="position:absolute;left:544px;top:120px;width:31px;height:19px;background:linear-gradient(180deg,#f2f2f2,#dedede 50%,#c6bec6);border:1px solid #b9b9b9;"></div>
<div style="position:absolute;left:544px;top:120.54px;height:20px;line-height:20px;font-size:13.5px;font-weight:normal;color:#111;white-space:nowrap;width:33px;text-align:center;" >Hide</div>
<div style="position:absolute;left:577px;top:120px;width:37px;height:19px;background:linear-gradient(180deg,#f2f2f2,#dedede 50%,#c6bec6);border:1px solid #b9b9b9;"></div>
<div style="position:absolute;left:577px;top:120.54px;height:20px;line-height:20px;font-size:13.5px;font-weight:normal;color:#111;white-space:nowrap;width:39px;text-align:center;" >Show</div>
<div style="position:absolute;left:616px;top:120px;width:15px;height:680px;background:#f0f0f0;"></div>
<div style="position:absolute;left:619px;top:126px;width:0px;height:0px;border-left:4px solid transparent;border-right:4px solid transparent;border-bottom:4px solid #a3a3a3;"></div>
<div style="position:absolute;left:619px;top:790px;width:0px;height:0px;border-left:4px solid transparent;border-right:4px solid transparent;border-top:4px solid #a3a3a3;"></div>
<div style="position:absolute;left:386px;top:149px;width:10px;height:10px;border:1px solid #a4a4a4;border-radius:2.5px;background:linear-gradient(180deg,#f4f4f4,#dcdcdc);"></div>
<svg width="10" height="10" viewBox="0 0 10 10" style="position:absolute;left:387px;top:150px"><path d="M1.6 5.6 L4.1 8.3 L8.8 1.9" stroke="#3c3c3c" stroke-width="2.3" fill="none" stroke-linejoin="round"/></svg>
<svg width="13" height="13" viewBox="0 0 13 13" style="position:absolute;left:402px;top:150px"><defs><linearGradient id="pkg" x1="0" x2="1" y1="0" y2="0"><stop offset="0.5" stop-color="#72ddfa"/><stop offset="0.5" stop-color="#14c8fa"/></linearGradient></defs><path d="M3.6 1.7 L3.6 10.3 M8.4 1.7 L8.4 10.3 M1.7 3.6 L10.3 3.6 M1.7 8.4 L10.3 8.4" stroke="url(#pkg)" stroke-width="3.4" stroke-linecap="round"/></svg>
<div style="position:absolute;left:418px;top:147.37px;height:20px;line-height:20px;font-size:14px;font-weight:bold;color:#000;white-space:nowrap;" >CustomerId</div>
<div style="position:absolute;left:386px;top:168px;width:10px;height:10px;border:1px solid #a4a4a4;border-radius:2.5px;background:linear-gradient(180deg,#f4f4f4,#dcdcdc);"></div>
<svg width="10" height="10" viewBox="0 0 10 10" style="position:absolute;left:387px;top:169px"><path d="M1.6 5.6 L4.1 8.3 L8.8 1.9" stroke="#3c3c3c" stroke-width="2.3" fill="none" stroke-linejoin="round"/></svg>
<div style="position:absolute;left:406px;top:166.37px;height:20px;line-height:20px;font-size:14px;font-weight:bold;color:#000;white-space:nowrap;" >FirstName</div>
<div style="position:absolute;left:386px;top:187px;width:10px;height:10px;border:1px solid #a4a4a4;border-radius:2.5px;background:linear-gradient(180deg,#f4f4f4,#dcdcdc);"></div>
<svg width="10" height="10" viewBox="0 0 10 10" style="position:absolute;left:387px;top:188px"><path d="M1.6 5.6 L4.1 8.3 L8.8 1.9" stroke="#3c3c3c" stroke-width="2.3" fill="none" stroke-linejoin="round"/></svg>
<div style="position:absolute;left:406px;top:185.37px;height:20px;line-height:20px;font-size:14px;font-weight:bold;color:#000;white-space:nowrap;" >LastName</div>
<div style="position:absolute;left:386px;top:206px;width:10px;height:10px;border:1px solid #a4a4a4;border-radius:2.5px;background:linear-gradient(180deg,#f4f4f4,#dcdcdc);"></div>
<svg width="10" height="10" viewBox="0 0 10 10" style="position:absolute;left:387px;top:207px"><path d="M1.6 5.6 L4.1 8.3 L8.8 1.9" stroke="#3c3c3c" stroke-width="2.3" fill="none" stroke-linejoin="round"/></svg>
<div style="position:absolute;left:406px;top:204.37px;height:20px;line-height:20px;font-size:14px;font-weight:normal;color:#000;white-space:nowrap;letter-spacing:0.3px;" >Company</div>
<div style="position:absolute;left:386px;top:225px;width:10px;height:10px;border:1px solid #a4a4a4;border-radius:2.5px;background:linear-gradient(180deg,#f4f4f4,#dcdcdc);"></div>
<svg width="10" height="10" viewBox="0 0 10 10" style="position:absolute;left:387px;top:226px"><path d="M1.6 5.6 L4.1 8.3 L8.8 1.9" stroke="#3c3c3c" stroke-width="2.3" fill="none" stroke-linejoin="round"/></svg>
<div style="position:absolute;left:406px;top:223.37px;height:20px;line-height:20px;font-size:14px;font-weight:normal;color:#000;white-space:nowrap;letter-spacing:0.3px;" >Address</div>
<div style="position:absolute;left:386px;top:244px;width:10px;height:10px;border:1px solid #a4a4a4;border-radius:2.5px;background:linear-gradient(180deg,#f4f4f4,#dcdcdc);"></div>
<svg width="10" height="10" viewBox="0 0 10 10" style="position:absolute;left:387px;top:245px"><path d="M1.6 5.6 L4.1 8.3 L8.8 1.9" stroke="#3c3c3c" stroke-width="2.3" fill="none" stroke-linejoin="round"/></svg>
<div style="position:absolute;left:406px;top:242.37px;height:20px;line-height:20px;font-size:14px;font-weight:normal;color:#000;white-space:nowrap;letter-spacing:0.3px;" >City</div>
<div style="position:absolute;left:386px;top:263px;width:10px;height:10px;border:1px solid #a4a4a4;border-radius:2.5px;background:linear-gradient(180deg,#f4f4f4,#dcdcdc);"></div>
<svg width="10" height="10" viewBox="0 0 10 10" style="position:absolute;left:387px;top:264px"><path d="M1.6 5.6 L4.1 8.3 L8.8 1.9" stroke="#3c3c3c" stroke-width="2.3" fill="none" stroke-linejoin="round"/></svg>
<div style="position:absolute;left:406px;top:261.37px;height:20px;line-height:20px;font-size:14px;font-weight:normal;color:#000;white-space:nowrap;letter-spacing:0.3px;" >State</div>
<div style="position:absolute;left:386px;top:282px;width:10px;height:10px;border:1px solid #a4a4a4;border-radius:2.5px;background:linear-gradient(180deg,#f4f4f4,#dcdcdc);"></div>
<svg width="10" height="10" viewBox="0 0 10 10" style="position:absolute;left:387px;top:283px"><path d="M1.6 5.6 L4.1 8.3 L8.8 1.9" stroke="#3c3c3c" stroke-width="2.3" fill="none" stroke-linejoin="round"/></svg>
<div style="position:absolute;left:406px;top:280.37px;height:20px;line-height:20px;font-size:14px;font-weight:normal;color:#000;white-space:nowrap;letter-spacing:0.3px;" >Country</div>
<div style="position:absolute;left:386px;top:301px;width:10px;height:10px;border:1px solid #a4a4a4;border-radius:2.5px;background:linear-gradient(180deg,#f4f4f4,#dcdcdc);"></div>
<svg width="10" height="10" viewBox="0 0 10 10" style="position:absolute;left:387px;top:302px"><path d="M1.6 5.6 L4.1 8.3 L8.8 1.9" stroke="#3c3c3c" stroke-width="2.3" fill="none" stroke-linejoin="round"/></svg>
<div style="position:absolute;left:406px;top:299.37px;height:20px;line-height:20px;font-size:14px;font-weight:normal;color:#000;white-space:nowrap;letter-spacing:0.3px;" >PostalCode</div>
<div style="position:absolute;left:386px;top:320px;width:10px;height:10px;border:1px solid #a4a4a4;border-radius:2.5px;background:linear-gradient(180deg,#f4f4f4,#dcdcdc);"></div>
<svg width="10" height="10" viewBox="0 0 10 10" style="position:absolute;left:387px;top:321px"><path d="M1.6 5.6 L4.1 8.3 L8.8 1.9" stroke="#3c3c3c" stroke-width="2.3" fill="none" stroke-linejoin="round"/></svg>
<div style="position:absolute;left:406px;top:318.37px;height:20px;line-height:20px;font-size:14px;font-weight:normal;color:#000;white-space:nowrap;letter-spacing:0.3px;" >Phone</div>
<div style="position:absolute;left:386px;top:339px;width:10px;height:10px;border:1px solid #a4a4a4;border-radius:2.5px;background:linear-gradient(180deg,#f4f4f4,#dcdcdc);"></div>
<svg width="10" height="10" viewBox="0 0 10 10" style="position:absolute;left:387px;top:340px"><path d="M1.6 5.6 L4.1 8.3 L8.8 1.9" stroke="#3c3c3c" stroke-width="2.3" fill="none" stroke-linejoin="round"/></svg>
<div style="position:absolute;left:406px;top:337.37px;height:20px;line-height:20px;font-size:14px;font-weight:normal;color:#000;white-space:nowrap;letter-spacing:0.3px;" >Fax</div>
<div style="position:absolute;left:386px;top:358px;width:10px;height:10px;border:1px solid #a4a4a4;border-radius:2.5px;background:linear-gradient(180deg,#f4f4f4,#dcdcdc);"></div>
<svg width="10" height="10" viewBox="0 0 10 10" style="position:absolute;left:387px;top:359px"><path d="M1.6 5.6 L4.1 8.3 L8.8 1.9" stroke="#3c3c3c" stroke-width="2.3" fill="none" stroke-linejoin="round"/></svg>
<div style="position:absolute;left:406px;top:356.37px;height:20px;line-height:20px;font-size:14px;font-weight:bold;color:#000;white-space:nowrap;" >Email</div>
<div style="position:absolute;left:386px;top:377px;width:10px;height:10px;border:1px solid #a4a4a4;border-radius:2.5px;background:linear-gradient(180deg,#f4f4f4,#dcdcdc);"></div>
<svg width="10" height="10" viewBox="0 0 10 10" style="position:absolute;left:387px;top:378px"><path d="M1.6 5.6 L4.1 8.3 L8.8 1.9" stroke="#3c3c3c" stroke-width="2.3" fill="none" stroke-linejoin="round"/></svg>
<svg width="13" height="13" viewBox="0 0 13 13" style="position:absolute;left:402px;top:377px"><circle cx="8.6" cy="4.6" r="3.5" fill="#a7b0ba"/><circle cx="9.2" cy="4" r="1.2" fill="#fff"/><path d="M6.4 7 L1.4 12" stroke="#b0bac6" stroke-width="2.3" stroke-linecap="round"/><path d="M3.8 9.6 L5 10.8" stroke="#b0bac6" stroke-width="1.4"/></svg>
<div style="position:absolute;left:369px;top:377px;width:10px;height:10px;border:1px solid #000;border-radius:1px;"><div style="position:absolute;left:2px;top:4px;width:6px;height:2px;background:#000"></div><div style="position:absolute;left:4px;top:2px;width:2px;height:6px;background:#000"></div></div>
<div style="position:absolute;left:418px;top:375.37px;height:20px;line-height:20px;font-size:14px;font-weight:normal;color:#000;white-space:nowrap;letter-spacing:0.3px;" >SupportRepId</div>
<div style="position:absolute;left:631px;top:120px;width:750px;height:680px;background:#f0f0f0;"></div>
<div style="position:absolute;left:0;top:0;width:1386px;height:785px;overflow:hidden;">
<div style="position:absolute;left:631px;top:120px;width:675px;height:44px;background:#f6f7f9;"></div>
<div style="position:absolute;left:675px;top:122.37px;height:20px;line-height:20px;font-size:14px;font-weight:normal;color:#000;white-space:nowrap;" >Phone</div>
<div style="position:absolute;left:784px;top:122px;width:24px;height:19px;background:linear-gradient(180deg,#efefef,#dcdcdc 50%,#c6bec6);"></div>
<svg width="12" height="8" viewBox="0 0 12 8" style="position:absolute;left:790px;top:128px"><path d="M1.5 1.5 L6 6 L10.5 1.5" stroke="#111" stroke-width="2" fill="none"/></svg>
<div style="position:absolute;left:673px;top:143px;width:136px;height:21px;background:#c4c4c4;"></div>
<div style="position:absolute;left:673px;top:143px;width:107px;height:17px;background:#fff;border:2px solid #aaaaaa;border-left-width:1px;border-right:1px solid #b8b8b8;"></div>
<div style="position:absolute;left:784px;top:144px;width:24px;height:19px;background:linear-gradient(180deg,#efefef,#dcdcdc 50%,#c6bec6);"></div>
<svg width="12" height="12" viewBox="0 0 12 12" style="position:absolute;left:790px;top:147px"><path d="M0 0 L12 0 L7.4 5.5 L7.4 12 L4.6 10 L4.6 5.5 Z" fill="#111"/></svg>
<div style="position:absolute;left:812px;top:122.37px;height:20px;line-height:20px;font-size:14px;font-weight:normal;color:#000;white-space:nowrap;" >Fax</div>
<div style="position:absolute;left:921px;top:122px;width:24px;height:19px;background:linear-gradient(180deg,#efefef,#dcdcdc 50%,#c6bec6);"></div>
<svg width="12" height="8" viewBox="0 0 12 8" style="position:absolute;left:927px;top:128px"><path d="M1.5 1.5 L6 6 L10.5 1.5" stroke="#111" stroke-width="2" fill="none"/></svg>
<div style="position:absolute;left:810px;top:143px;width:136px;height:21px;background:#c4c4c4;"></div>
<div style="position:absolute;left:810px;top:143px;width:107px;height:17px;background:#fff;border:2px solid #aaaaaa;border-left-width:1px;border-right:1px solid #b8b8b8;"></div>
<div style="position:absolute;left:921px;top:144px;width:24px;height:19px;background:linear-gradient(180deg,#efefef,#dcdcdc 50%,#c6bec6);"></div>
<svg width="12" height="12" viewBox="0 0 12 12" style="position:absolute;left:927px;top:147px"><path d="M0 0 L12 0 L7.4 5.5 L7.4 12 L4.6 10 L4.6 5.5 Z" fill="#111"/></svg>
<div style="position:absolute;left:949px;top:122.37px;height:20px;line-height:20px;font-size:14px;font-weight:bold;color:#000;white-space:nowrap;" >Email</div>
<div style="position:absolute;left:1119px;top:122px;width:24px;height:19px;background:linear-gradient(180deg,#efefef,#dcdcdc 50%,#c6bec6);"></div>
<svg width="12" height="8" viewBox="0 0 12 8" style="position:absolute;left:1125px;top:128px"><path d="M1.5 1.5 L6 6 L10.5 1.5" stroke="#111" stroke-width="2" fill="none"/></svg>
<div style="position:absolute;left:947px;top:143px;width:197px;height:21px;background:#c4c4c4;"></div>
<div style="position:absolute;left:947px;top:143px;width:168px;height:17px;background:#fff;border:2px solid #aaaaaa;border-left-width:1px;border-right:1px solid #b8b8b8;"></div>
<div style="position:absolute;left:1119px;top:144px;width:24px;height:19px;background:linear-gradient(180deg,#efefef,#dcdcdc 50%,#c6bec6);"></div>
<svg width="12" height="12" viewBox="0 0 12 12" style="position:absolute;left:1125px;top:147px"><path d="M0 0 L12 0 L7.4 5.5 L7.4 12 L4.6 10 L4.6 5.5 Z" fill="#111"/></svg>
<svg width="13" height="13" viewBox="0 0 13 13" style="position:absolute;left:1147px;top:125px"><circle cx="8.6" cy="4.6" r="3.5" fill="#a7b0ba"/><circle cx="9.2" cy="4" r="1.2" fill="#fff"/><path d="M6.4 7 L1.4 12" stroke="#b0bac6" stroke-width="2.3" stroke-linecap="round"/><path d="M3.8 9.6 L5 10.8" stroke="#b0bac6" stroke-width="1.4"/></svg>
<div style="position:absolute;left:1162px;top:122.37px;height:20px;line-height:20px;font-size:14px;font-weight:normal;color:#000;white-space:nowrap;" >SupportRepId</div>
<div style="position:absolute;left:1281px;top:122px;width:24px;height:19px;background:linear-gradient(180deg,#efefef,#dcdcdc 50%,#c6bec6);"></div>
<svg width="12" height="8" viewBox="0 0 12 8" style="position:absolute;left:1287px;top:128px"><path d="M1.5 1.5 L6 6 L10.5 1.5" stroke="#111" stroke-width="2" fill="none"/></svg>
<div style="position:absolute;left:1145px;top:143px;width:161px;height:21px;background:#c4c4c4;"></div>
<div style="position:absolute;left:1145px;top:143px;width:132px;height:17px;background:#fff;border:2px solid #aaaaaa;border-left-width:1px;border-right:1px solid #b8b8b8;"></div>
<div style="position:absolute;left:1281px;top:144px;width:24px;height:19px;background:linear-gradient(180deg,#efefef,#dcdcdc 50%,#c6bec6);"></div>
<svg width="12" height="12" viewBox="0 0 12 12" style="position:absolute;left:1287px;top:147px"><path d="M0 0 L12 0 L7.4 5.5 L7.4 12 L4.6 10 L4.6 5.5 Z" fill="#111"/></svg>
<div style="position:absolute;left:672px;top:164px;width:634px;height:22px;background:#ffffff;"></div>
<div style="position:absolute;left:631px;top:164px;width:41px;height:22px;background:#f6f7f9;"></div>
<div style="position:absolute;left:634px;top:165.37px;height:20px;line-height:20px;font-size:14px;font-weight:normal;color:#000;white-space:nowrap;" >1</div>
<div style="position:absolute;left:675px;top:165.37px;height:20px;line-height:20px;font-size:14px;font-weight:normal;color:#000;white-space:nowrap;width:133px;overflow:hidden;" >+55 (12) 3923-5555</div>
<div style="position:absolute;left:812px;top:165.37px;height:20px;line-height:20px;font-size:14px;font-weight:normal;color:#000;white-space:nowrap;width:133px;overflow:hidden;" >+55 (12) 3923-5566</div>
<div style="position:absolute;left:949px;top:165.37px;height:20px;line-height:20px;font-size:14px;font-weight:normal;color:#000;white-space:nowrap;width:194px;overflow:hidden;letter-spacing:0.25px;" >luisg@embraer.com.br</div>
<div style="position:absolute;left:1147px;top:165.37px;height:20px;line-height:20px;font-size:14px;font-weight:normal;color:#000;white-space:nowrap;" >3</div>
<div style="position:absolute;left:1160px;top:165.37px;height:20px;line-height:20px;font-size:14px;font-weight:normal;color:#858585;white-space:nowrap;" >Peacock</div>
<div style="position:absolute;left:672px;top:186px;width:634px;height:22px;background:#ffffff;"></div>
<div style="position:absolute;left:631px;top:186px;width:41px;height:22px;background:#f6f7f9;"></div>
<div style="position:absolute;left:634px;top:187.37px;height:20px;line-height:20px;font-size:14px;font-weight:normal;color:#000;white-space:nowrap;" >2</div>
<div style="position:absolute;left:675px;top:187.37px;height:20px;line-height:20px;font-size:14px;font-weight:normal;color:#000;white-space:nowrap;width:133px;overflow:hidden;" >+49 0711 2842222</div>
<div style="position:absolute;left:812px;top:187.37px;height:20px;line-height:20px;font-size:14px;font-weight:normal;color:#808080;white-space:nowrap;font-style:italic;" >(NULL)</div>
<div style="position:absolute;left:949px;top:187.37px;height:20px;line-height:20px;font-size:14px;font-weight:normal;color:#000;white-space:nowrap;width:194px;overflow:hidden;letter-spacing:0.25px;" >leonekohler@surfeu.de</div>
<div style="position:absolute;left:1147px;top:187.37px;height:20px;line-height:20px;font-size:14px;font-weight:normal;color:#000;white-space:nowrap;" >5</div>
<div style="position:absolute;left:1160px;top:187.37px;height:20px;line-height:20px;font-size:14px;font-weight:normal;color:#858585;white-space:nowrap;" >Johnson</div>
<div style="position:absolute;left:672px;top:208px;width:634px;height:22px;background:#ebebeb;"></div>
<div style="position:absolute;left:631px;top:208px;width:41px;height:22px;background:#f6f7f9;"></div>
<div style="position:absolute;left:634px;top:209.37px;height:20px;line-height:20px;font-size:14px;font-weight:normal;color:#000;white-space:nowrap;" >3</div>
<div style="position:absolute;left:675px;top:209.37px;height:20px;line-height:20px;font-size:14px;font-weight:normal;color:#000;white-space:nowrap;width:133px;overflow:hidden;" >+1 (514) 721-4711</div>
<div style="position:absolute;left:812px;top:209.37px;height:20px;line-height:20px;font-size:14px;font-weight:normal;color:#808080;white-space:nowrap;font-style:italic;" >(NULL)</div>
<div style="position:absolute;left:949px;top:209.37px;height:20px;line-height:20px;font-size:14px;font-weight:normal;color:#000;white-space:nowrap;width:194px;overflow:hidden;letter-spacing:0.25px;" >ftremblay@gmail.com</div>
<div style="position:absolute;left:1147px;top:209.37px;height:20px;line-height:20px;font-size:14px;font-weight:normal;color:#000;white-space:nowrap;" >3</div>
<div style="position:absolute;left:1160px;top:209.37px;height:20px;line-height:20px;font-size:14px;font-weight:normal;color:#858585;white-space:nowrap;" >Peacock</div>
<div style="position:absolute;left:672px;top:230px;width:634px;height:22px;background:#ffffff;"></div>
<div style="position:absolute;left:631px;top:230px;width:41px;height:22px;background:#f6f7f9;"></div>
<div style="position:absolute;left:634px;top:231.37px;height:20px;line-height:20px;font-size:14px;font-weight:normal;color:#000;white-space:nowrap;" >4</div>
<div style="position:absolute;left:675px;top:231.37px;height:20px;line-height:20px;font-size:14px;font-weight:normal;color:#000;white-space:nowrap;width:133px;overflow:hidden;" >+47 22 44 22 22</div>
<div style="position:absolute;left:812px;top:231.37px;height:20px;line-height:20px;font-size:14px;font-weight:normal;color:#808080;white-space:nowrap;font-style:italic;" >(NULL)</div>
<div style="position:absolute;left:949px;top:231.37px;height:20px;line-height:20px;font-size:14px;font-weight:normal;color:#000;white-space:nowrap;width:194px;overflow:hidden;letter-spacing:0.25px;" >bjorn.hansen@yahoo.no</div>
<div style="position:absolute;left:1147px;top:231.37px;height:20px;line-height:20px;font-size:14px;font-weight:normal;color:#000;white-space:nowrap;" >4</div>
<div style="position:absolute;left:1160px;top:231.37px;height:20px;line-height:20px;font-size:14px;font-weight:normal;color:#858585;white-space:nowrap;" >Park</div>
<div style="position:absolute;left:672px;top:252px;width:634px;height:22px;background:#ffffff;"></div>
<div style="position:absolute;left:631px;top:252px;width:41px;height:22px;background:#f6f7f9;"></div>
<div style="position:absolute;left:634px;top:253.37px;height:20px;line-height:20px;font-size:14px;font-weight:normal;color:#000;white-space:nowrap;" >5</div>
<div style="position:absolute;left:675px;top:253.37px;height:20px;line-height:20px;font-size:14px;font-weight:normal;color:#000;white-space:nowrap;width:133px;overflow:hidden;" >+420 2 4172 5555</div>
<div style="position:absolute;left:812px;top:253.37px;height:20px;line-height:20px;font-size:14px;font-weight:normal;color:#000;white-space:nowrap;width:133px;overflow:hidden;" >+420 2 4172 5555</div>
<div style="position:absolute;left:949px;top:253.37px;height:20px;line-height:20px;font-size:14px;font-weight:normal;color:#000;white-space:nowrap;width:194px;overflow:hidden;letter-spacing:0.25px;" >frantisekw@jetbrains.com</div>
<div style="position:absolute;left:1147px;top:253.37px;height:20px;line-height:20px;font-size:14px;font-weight:normal;color:#000;white-space:nowrap;" >4</div>
<div style="position:absolute;left:1160px;top:253.37px;height:20px;line-height:20px;font-size:14px;font-weight:normal;color:#858585;white-space:nowrap;" >Park</div>
<div style="position:absolute;left:672px;top:274px;width:634px;height:22px;background:#ebf5ff;"></div>
<div style="position:absolute;left:631px;top:274px;width:41px;height:22px;background:#f6f7f9;"></div>
<div style="position:absolute;left:634px;top:275.37px;height:20px;line-height:20px;font-size:14px;font-weight:normal;color:#000;white-space:nowrap;" >6</div>
<div style="position:absolute;left:675px;top:275.37px;height:20px;line-height:20px;font-size:14px;font-weight:normal;color:#000;white-space:nowrap;width:133px;overflow:hidden;" >+420 2 4177 0449</div>
<div style="position:absolute;left:812px;top:275.37px;height:20px;line-height:20px;font-size:14px;font-weight:normal;color:#808080;white-space:nowrap;font-style:italic;" >(NULL)</div>
<div style="position:absolute;left:949px;top:275.37px;height:20px;line-height:20px;font-size:14px;font-weight:normal;color:#000;white-space:nowrap;width:194px;overflow:hidden;letter-spacing:0.25px;" >hholy@gmail.com</div>
<div style="position:absolute;left:1147px;top:275.37px;height:20px;line-height:20px;font-size:14px;font-weight:normal;color:#000;white-space:nowrap;" >5</div>
<div style="position:absolute;left:1160px;top:275.37px;height:20px;line-height:20px;font-size:14px;font-weight:normal;color:#858585;white-space:nowrap;" >Johnson</div>
<div style="position:absolute;left:672px;top:296px;width:634px;height:22px;background:#ffffff;"></div>
<div style="position:absolute;left:631px;top:296px;width:41px;height:22px;background:#f6f7f9;"></div>
<div style="position:absolute;left:634px;top:297.37px;height:20px;line-height:20px;font-size:14px;font-weight:normal;color:#000;white-space:nowrap;" >7</div>
<div style="position:absolute;left:675px;top:297.37px;height:20px;line-height:20px;font-size:14px;font-weight:normal;color:#000;white-space:nowrap;width:133px;overflow:hidden;" >+43 01 5134505</div>
<div style="position:absolute;left:812px;top:297.37px;height:20px;line-height:20px;font-size:14px;font-weight:normal;color:#808080;white-space:nowrap;font-style:italic;" >(NULL)</div>
<div style="position:absolute;left:949px;top:297.37px;height:20px;line-height:20px;font-size:14px;font-weight:normal;color:#000;white-space:nowrap;width:194px;overflow:hidden;letter-spacing:0.25px;" >astrid.gruber@apple.at</div>
<div style="position:absolute;left:1147px;top:297.37px;height:20px;line-height:20px;font-size:14px;font-weight:normal;color:#000;white-space:nowrap;" >5</div>
<div style="position:absolute;left:1160px;top:297.37px;height:20px;line-height:20px;font-size:14px;font-weight:normal;color:#858585;white-space:nowrap;" >Johnson</div>
<div style="position:absolute;left:672px;top:318px;width:634px;height:22px;background:#ffffff;"></div>
<div style="position:absolute;left:631px;top:318px;width:41px;height:22px;background:#f6f7f9;"></div>
<div style="position:absolute;left:634px;top:319.37px;height:20px;line-height:20px;font-size:14px;font-weight:normal;color:#000;white-space:nowrap;" >8</div>
<div style="position:absolute;left:672px;top:318px;width:137px;height:22px;background:#ffffdb;"></div>
<div style="position:absolute;left:675px;top:319.37px;height:20px;line-height:20px;font-size:14px;font-weight:normal;color:#000;white-space:nowrap;width:133px;overflow:hidden;" >+32 02 219 03 03</div>
<div style="position:absolute;left:809px;top:318px;width:137px;height:22px;background:#ffe4c4;"></div>
<div style="position:absolute;left:812px;top:319.37px;height:20px;line-height:20px;font-size:14px;font-weight:normal;color:#000;white-space:nowrap;width:133px;overflow:hidden;" >+55 (11) 3033-4564</div>
<div style="position:absolute;left:946px;top:318px;width:198px;height:22px;background:#ffffdb;"></div>
<div style="position:absolute;left:949px;top:319.37px;height:20px;line-height:20px;font-size:14px;font-weight:normal;color:#000;white-space:nowrap;width:194px;overflow:hidden;letter-spacing:0.25px;" >daan_peeters@apple.be</div>
<div style="position:absolute;left:1144px;top:318px;width:162px;height:22px;background:#ffffdb;"></div>
<div style="position:absolute;left:1147px;top:319.37px;height:20px;line-height:20px;font-size:14px;font-weight:normal;color:#000;white-space:nowrap;" >4</div>
<div style="position:absolute;left:1160px;top:319.37px;height:20px;line-height:20px;font-size:14px;font-weight:normal;color:#858585;white-space:nowrap;" >Park</div>
<div style="position:absolute;left:672px;top:340px;width:634px;height:22px;background:#ebebeb;"></div>
<div style="position:absolute;left:631px;top:340px;width:41px;height:22px;background:#f6f7f9;"></div>
<div style="position:absolute;left:634px;top:341.37px;height:20px;line-height:20px;font-size:14px;font-weight:normal;color:#000;white-space:nowrap;" >9</div>
<div style="position:absolute;left:672px;top:340px;width:137px;height:22px;background:#ffffdb;"></div>
<div style="position:absolute;left:675px;top:341.37px;height:20px;line-height:20px;font-size:14px;font-weight:normal;color:#000;white-space:nowrap;width:133px;overflow:hidden;" >+453 3331 9991</div>
<div style="position:absolute;left:809px;top:340px;width:137px;height:22px;background:#ffe4c4;"></div>
<div style="position:absolute;left:812px;top:341.37px;height:20px;line-height:20px;font-size:14px;font-weight:normal;color:#000;white-space:nowrap;width:133px;overflow:hidden;" >+55 (11) 3033-4564</div>
<div style="position:absolute;left:946px;top:340px;width:198px;height:22px;background:#ffffdb;"></div>
<div style="position:absolute;left:949px;top:341.37px;height:20px;line-height:20px;font-size:14px;font-weight:normal;color:#000;white-space:nowrap;width:194px;overflow:hidden;letter-spacing:0.25px;" >kara.nielsen@jubii.dk</div>
<div style="position:absolute;left:1144px;top:340px;width:162px;height:22px;background:#ffffdb;"></div>
<div style="position:absolute;left:1147px;top:341.37px;height:20px;line-height:20px;font-size:14px;font-weight:normal;color:#000;white-space:nowrap;" >4</div>
<div style="position:absolute;left:1160px;top:341.37px;height:20px;line-height:20px;font-size:14px;font-weight:normal;color:#858585;white-space:nowrap;" >Park</div>
<div style="position:absolute;left:672px;top:362px;width:634px;height:22px;background:#ffffff;"></div>
<div style="position:absolute;left:631px;top:362px;width:41px;height:22px;background:#f6f7f9;"></div>
<div style="position:absolute;left:634px;top:363.37px;height:20px;line-height:20px;font-size:14px;font-weight:normal;color:#000;white-space:nowrap;" >10</div>
<div style="position:absolute;left:675px;top:363.37px;height:20px;line-height:20px;font-size:14px;font-weight:normal;color:#000;white-space:nowrap;width:133px;overflow:hidden;" >+55 (11) 3033-5446</div>
<div style="position:absolute;left:812px;top:363.37px;height:20px;line-height:20px;font-size:14px;font-weight:normal;color:#000;white-space:nowrap;width:133px;overflow:hidden;" >+55 (11) 3033-4564</div>
<div style="position:absolute;left:949px;top:363.37px;height:20px;line-height:20px;font-size:14px;font-weight:normal;color:#000;white-space:nowrap;width:194px;overflow:hidden;letter-spacing:0.25px;" >eduardo@woodstock.com.br</div>
<div style="position:absolute;left:1147px;top:363.37px;height:20px;line-height:20px;font-size:14px;font-weight:normal;color:#000;white-space:nowrap;" >4</div>
<div style="position:absolute;left:1160px;top:363.37px;height:20px;line-height:20px;font-size:14px;font-weight:normal;color:#858585;white-space:nowrap;" >Park</div>
<div style="position:absolute;left:672px;top:384px;width:634px;height:22px;background:#ffffff;"></div>
<div style="position:absolute;left:631px;top:384px;width:41px;height:22px;background:#f6f7f9;"></div>
<div style="position:absolute;left:634px;top:385.37px;height:20px;line-height:20px;font-size:14px;font-weight:normal;color:#000;white-space:nowrap;" >11</div>
<div style="position:absolute;left:675px;top:385.37px;height:20px;line-height:20px;font-size:14px;font-weight:normal;color:#000;white-space:nowrap;width:133px;overflow:hidden;" >+55 (11) 3055-3278</div>
<div style="position:absolute;left:812px;top:385.37px;height:20px;line-height:20px;font-size:14px;font-weight:normal;color:#000;white-space:nowrap;width:133px;overflow:hidden;" >+55 (11) 3055-8131</div>
<div style="position:absolute;left:949px;top:385.37px;height:20px;line-height:20px;font-size:14px;font-weight:normal;color:#000;white-space:nowrap;width:194px;overflow:hidden;letter-spacing:0.25px;" >alero@uol.com.br</div>
<div style="position:absolute;left:1147px;top:385.37px;height:20px;line-height:20px;font-size:14px;font-weight:normal;color:#000;white-space:nowrap;" >5</div>
<div style="position:absolute;left:1160px;top:385.37px;height:20px;line-height:20px;font-size:14px;font-weight:normal;color:#858585;white-space:nowrap;" >Johnson</div>
<div style="position:absolute;left:672px;top:406px;width:634px;height:22px;background:#ebf5ff;"></div>
<div style="position:absolute;left:631px;top:406px;width:41px;height:22px;background:#f6f7f9;"></div>
<div style="position:absolute;left:634px;top:407.37px;height:20px;line-height:20px;font-size:14px;font-weight:normal;color:#000;white-space:nowrap;" >12</div>
<div style="position:absolute;left:675px;top:407.37px;height:20px;line-height:20px;font-size:14px;font-weight:normal;color:#000;white-space:nowrap;width:133px;overflow:hidden;" >+55 (21) 2271-7000</div>
<div style="position:absolute;left:809px;top:406px;width:137px;height:22px;background:#0ebcfd;"></div>
<div style="position:absolute;left:812px;top:407.37px;height:20px;line-height:20px;font-size:14px;font-weight:normal;color:#fff;white-space:nowrap;width:133px;overflow:hidden;" >+55 (21) 2271-7070</div>
<div style="position:absolute;left:946px;top:406px;width:198px;height:22px;background:#0ebcfd;"></div>
<div style="position:absolute;left:949px;top:407.37px;height:20px;line-height:20px;font-size:14px;font-weight:normal;color:#fff;white-space:nowrap;width:194px;overflow:hidden;letter-spacing:0.25px;" >roberto.almeida@riotur.gov.br</div>
<div style="position:absolute;left:1147px;top:407.37px;height:20px;line-height:20px;font-size:14px;font-weight:normal;color:#000;white-space:nowrap;" >3</div>
<div style="position:absolute;left:1160px;top:407.37px;height:20px;line-height:20px;font-size:14px;font-weight:normal;color:#858585;white-space:nowrap;" >Peacock</div>
<div style="position:absolute;left:672px;top:428px;width:634px;height:22px;background:#ffffff;"></div>
<div style="position:absolute;left:631px;top:428px;width:41px;height:22px;background:#f6f7f9;"></div>
<div style="position:absolute;left:634px;top:429.37px;height:20px;line-height:20px;font-size:14px;font-weight:normal;color:#000;white-space:nowrap;" >13</div>
<div style="position:absolute;left:675px;top:429.37px;height:20px;line-height:20px;font-size:14px;font-weight:normal;color:#000;white-space:nowrap;width:133px;overflow:hidden;" >+55 (61) 3363-5547</div>
<div style="position:absolute;left:809px;top:428px;width:137px;height:22px;background:#0ebcfd;"></div>
<div style="position:absolute;left:812px;top:429.37px;height:20px;line-height:20px;font-size:14px;font-weight:normal;color:#fff;white-space:nowrap;width:133px;overflow:hidden;" >+55 (61) 3363-7855</div>
<div style="position:absolute;left:946px;top:428px;width:198px;height:22px;background:#0ebcfd;"></div>
<div style="position:absolute;left:949px;top:429.37px;height:20px;line-height:20px;font-size:14px;font-weight:normal;color:#fff;white-space:nowrap;width:194px;overflow:hidden;letter-spacing:0.25px;" >fernadaramos4@uol.com.br</div>
<div style="position:absolute;left:1147px;top:429.37px;height:20px;line-height:20px;font-size:14px;font-weight:normal;color:#000;white-space:nowrap;" >4</div>
<div style="position:absolute;left:1160px;top:429.37px;height:20px;line-height:20px;font-size:14px;font-weight:normal;color:#858585;white-space:nowrap;" >Park</div>
<div style="position:absolute;left:672px;top:450px;width:634px;height:22px;background:#ffffff;"></div>
<div style="position:absolute;left:631px;top:450px;width:41px;height:22px;background:#f6f7f9;"></div>
<div style="position:absolute;left:634px;top:451.37px;height:20px;line-height:20px;font-size:14px;font-weight:normal;color:#000;white-space:nowrap;" >14</div>
<div style="position:absolute;left:675px;top:451.37px;height:20px;line-height:20px;font-size:14px;font-weight:normal;color:#000;white-space:nowrap;width:133px;overflow:hidden;" >+1 (780) 434-4554</div>
<div style="position:absolute;left:809px;top:450px;width:137px;height:22px;background:#0ebcfd;"></div>
<div style="position:absolute;left:812px;top:451.37px;height:20px;line-height:20px;font-size:14px;font-weight:normal;color:#fff;white-space:nowrap;width:133px;overflow:hidden;" >+1 (780) 434-5565</div>
<div style="position:absolute;left:946px;top:450px;width:198px;height:22px;background:#0ebcfd;"></div>
<div style="position:absolute;left:949px;top:451.37px;height:20px;line-height:20px;font-size:14px;font-weight:normal;color:#fff;white-space:nowrap;width:194px;overflow:hidden;letter-spacing:0.25px;" >mphilips12@shaw.ca</div>
<div style="position:absolute;left:1147px;top:451.37px;height:20px;line-height:20px;font-size:14px;font-weight:normal;color:#000;white-space:nowrap;" >5</div>
<div style="position:absolute;left:1160px;top:451.37px;height:20px;line-height:20px;font-size:14px;font-weight:normal;color:#858585;white-space:nowrap;" >Johnson</div>
<div style="position:absolute;left:672px;top:472px;width:634px;height:22px;background:#ebebeb;"></div>
<div style="position:absolute;left:631px;top:472px;width:41px;height:22px;background:#f6f7f9;"></div>
<div style="position:absolute;left:634px;top:473.37px;height:20px;line-height:20px;font-size:14px;font-weight:normal;color:#000;white-space:nowrap;" >15</div>
<div style="position:absolute;left:675px;top:473.37px;height:20px;line-height:20px;font-size:14px;font-weight:normal;color:#000;white-space:nowrap;width:133px;overflow:hidden;" >+1 (604) 688-2255</div>
<div style="position:absolute;left:809px;top:472px;width:137px;height:22px;background:#0ebcfd;"></div>
<div style="position:absolute;left:812px;top:473.37px;height:20px;line-height:20px;font-size:14px;font-weight:normal;color:#fff;white-space:nowrap;width:133px;overflow:hidden;" >+1 (604) 688-8756</div>
<div style="position:absolute;left:946px;top:472px;width:198px;height:22px;background:#0ebcfd;"></div>
<div style="position:absolute;left:949px;top:473.37px;height:20px;line-height:20px;font-size:14px;font-weight:normal;color:#fff;white-space:nowrap;width:194px;overflow:hidden;letter-spacing:0.25px;" >jenniferp@rogers.ca</div>
<div style="position:absolute;left:1147px;top:473.37px;height:20px;line-height:20px;font-size:14px;font-weight:normal;color:#000;white-space:nowrap;" >3</div>
<div style="position:absolute;left:1160px;top:473.37px;height:20px;line-height:20px;font-size:14px;font-weight:normal;color:#858585;white-space:nowrap;" >Peacock</div>
<div style="position:absolute;left:672px;top:494px;width:634px;height:22px;background:#ffffff;"></div>
<div style="position:absolute;left:631px;top:494px;width:41px;height:22px;background:#f6f7f9;"></div>
<div style="position:absolute;left:634px;top:495.37px;height:20px;line-height:20px;font-size:14px;font-weight:normal;color:#000;white-space:nowrap;" >16</div>
<div style="position:absolute;left:675px;top:495.37px;height:20px;line-height:20px;font-size:14px;font-weight:normal;color:#000;white-space:nowrap;width:133px;overflow:hidden;" >+1 (650) 253-0000</div>
<div style="position:absolute;left:809px;top:494px;width:137px;height:22px;background:#0ebcfd;"></div>
<div style="position:absolute;left:812px;top:495.37px;height:20px;line-height:20px;font-size:14px;font-weight:normal;color:#fff;white-space:nowrap;width:133px;overflow:hidden;" >+1 (650) 253-0000</div>
<div style="position:absolute;left:946px;top:494px;width:198px;height:22px;background:#0ebcfd;"></div>
<div style="position:absolute;left:949px;top:495.37px;height:20px;line-height:20px;font-size:14px;font-weight:normal;color:#fff;white-space:nowrap;width:194px;overflow:hidden;letter-spacing:0.25px;" >fharris@google.com</div>
<div style="position:absolute;left:1147px;top:495.37px;height:20px;line-height:20px;font-size:14px;font-weight:normal;color:#000;white-space:nowrap;" >4</div>
<div style="position:absolute;left:1160px;top:495.37px;height:20px;line-height:20px;font-size:14px;font-weight:normal;color:#858585;white-space:nowrap;" >Park</div>
<div style="position:absolute;left:672px;top:516px;width:634px;height:22px;background:#ffffff;"></div>
<div style="position:absolute;left:631px;top:516px;width:41px;height:22px;background:#f6f7f9;"></div>
<div style="position:absolute;left:634px;top:517.37px;height:20px;line-height:20px;font-size:14px;font-weight:normal;color:#000;white-space:nowrap;" >17</div>
<div style="position:absolute;left:675px;top:517.37px;height:20px;line-height:20px;font-size:14px;font-weight:normal;color:#000;white-space:nowrap;width:133px;overflow:hidden;" >+1 (425) 882-8080</div>
<div style="position:absolute;left:809px;top:516px;width:137px;height:22px;background:#0ebcfd;"></div>
<div style="position:absolute;left:812px;top:517.37px;height:20px;line-height:20px;font-size:14px;font-weight:normal;color:#fff;white-space:nowrap;width:133px;overflow:hidden;" >+1 (425) 882-8081</div>
<div style="position:absolute;left:946px;top:516px;width:198px;height:22px;background:#0ebcfd;"></div>
<div style="position:absolute;left:949px;top:517.37px;height:20px;line-height:20px;font-size:14px;font-weight:normal;color:#fff;white-space:nowrap;width:194px;overflow:hidden;letter-spacing:0.25px;" >jacksmith@microsoft.com</div>
<div style="position:absolute;left:1147px;top:517.37px;height:20px;line-height:20px;font-size:14px;font-weight:normal;color:#000;white-space:nowrap;" >5</div>
<div style="position:absolute;left:1160px;top:517.37px;height:20px;line-height:20px;font-size:14px;font-weight:normal;color:#858585;white-space:nowrap;" >Johnson</div>
<div style="position:absolute;left:672px;top:538px;width:634px;height:22px;background:#ebf5ff;"></div>
<div style="position:absolute;left:631px;top:538px;width:41px;height:22px;background:#f6f7f9;"></div>
<div style="position:absolute;left:634px;top:539.37px;height:20px;line-height:20px;font-size:14px;font-weight:normal;color:#000;white-space:nowrap;" >18</div>
<div style="position:absolute;left:675px;top:539.37px;height:20px;line-height:20px;font-size:14px;font-weight:normal;color:#000;white-space:nowrap;width:133px;overflow:hidden;" >+1 (212) 221-3546</div>
<div style="position:absolute;left:812px;top:539.37px;height:20px;line-height:20px;font-size:14px;font-weight:normal;color:#000;white-space:nowrap;width:133px;overflow:hidden;" >+1 (212) 221-4679</div>
<div style="position:absolute;left:949px;top:539.37px;height:20px;line-height:20px;font-size:14px;font-weight:normal;color:#000;white-space:nowrap;width:194px;overflow:hidden;letter-spacing:0.25px;" >michelleb@aol.com</div>
<div style="position:absolute;left:1147px;top:539.37px;height:20px;line-height:20px;font-size:14px;font-weight:normal;color:#000;white-space:nowrap;" >3</div>
<div style="position:absolute;left:1160px;top:539.37px;height:20px;line-height:20px;font-size:14px;font-weight:normal;color:#858585;white-space:nowrap;" >Peacock</div>
<div style="position:absolute;left:672px;top:560px;width:634px;height:22px;background:#ffffff;"></div>
<div style="position:absolute;left:631px;top:560px;width:41px;height:22px;background:#f6f7f9;"></div>
<div style="position:absolute;left:634px;top:561.37px;height:20px;line-height:20px;font-size:14px;font-weight:normal;color:#000;white-space:nowrap;" >19</div>
<div style="position:absolute;left:675px;top:561.37px;height:20px;line-height:20px;font-size:14px;font-weight:normal;color:#000;white-space:nowrap;width:133px;overflow:hidden;" >+1 (408) 996-1010</div>
<div style="position:absolute;left:812px;top:561.37px;height:20px;line-height:20px;font-size:14px;font-weight:normal;color:#000;white-space:nowrap;width:133px;overflow:hidden;" >+1 (408) 996-1011</div>
<div style="position:absolute;left:949px;top:561.37px;height:20px;line-height:20px;font-size:14px;font-weight:normal;color:#000;white-space:nowrap;width:194px;overflow:hidden;letter-spacing:0.25px;" >tgoyer@apple.com</div>
<div style="position:absolute;left:1147px;top:561.37px;height:20px;line-height:20px;font-size:14px;font-weight:normal;color:#000;white-space:nowrap;" >3</div>
<div style="position:absolute;left:1160px;top:561.37px;height:20px;line-height:20px;font-size:14px;font-weight:normal;color:#858585;white-space:nowrap;" >Peacock</div>
<div style="position:absolute;left:672px;top:582px;width:634px;height:22px;background:#ffffff;"></div>
<div style="position:absolute;left:631px;top:582px;width:41px;height:22px;background:#f6f7f9;"></div>
<div style="position:absolute;left:634px;top:583.37px;height:20px;line-height:20px;font-size:14px;font-weight:normal;color:#000;white-space:nowrap;" >20</div>
<div style="position:absolute;left:675px;top:583.37px;height:20px;line-height:20px;font-size:14px;font-weight:normal;color:#000;white-space:nowrap;width:133px;overflow:hidden;" >+1 (650) 644-3358</div>
<div style="position:absolute;left:812px;top:583.37px;height:20px;line-height:20px;font-size:14px;font-weight:normal;color:#808080;white-space:nowrap;font-style:italic;" >(NULL)</div>
<div style="position:absolute;left:949px;top:583.37px;height:20px;line-height:20px;font-size:14px;font-weight:normal;color:#000;white-space:nowrap;width:194px;overflow:hidden;letter-spacing:0.25px;" >dmiller@comcast.com</div>
<div style="position:absolute;left:1147px;top:583.37px;height:20px;line-height:20px;font-size:14px;font-weight:normal;color:#000;white-space:nowrap;" >4</div>
<div style="position:absolute;left:1160px;top:583.37px;height:20px;line-height:20px;font-size:14px;font-weight:normal;color:#858585;white-space:nowrap;" >Park</div>
<div style="position:absolute;left:672px;top:604px;width:634px;height:22px;background:#ebebeb;"></div>
<div style="position:absolute;left:631px;top:604px;width:41px;height:22px;background:#f6f7f9;"></div>
<div style="position:absolute;left:634px;top:605.37px;height:20px;line-height:20px;font-size:14px;font-weight:normal;color:#000;white-space:nowrap;" >21</div>
<div style="position:absolute;left:675px;top:605.37px;height:20px;line-height:20px;font-size:14px;font-weight:normal;color:#000;white-space:nowrap;width:133px;overflow:hidden;" >+1 (775) 223-7665</div>
<div style="position:absolute;left:812px;top:605.37px;height:20px;line-height:20px;font-size:14px;font-weight:normal;color:#808080;white-space:nowrap;font-style:italic;" >(NULL)</div>
<div style="position:absolute;left:949px;top:605.37px;height:20px;line-height:20px;font-size:14px;font-weight:normal;color:#000;white-space:nowrap;width:194px;overflow:hidden;letter-spacing:0.25px;" >kachase@hotmail.com</div>
<div style="position:absolute;left:1147px;top:605.37px;height:20px;line-height:20px;font-size:14px;font-weight:normal;color:#000;white-space:nowrap;" >5</div>
<div style="position:absolute;left:1160px;top:605.37px;height:20px;line-height:20px;font-size:14px;font-weight:normal;color:#858585;white-space:nowrap;" >Johnson</div>
<div style="position:absolute;left:672px;top:626px;width:634px;height:22px;background:#ffffff;"></div>
<div style="position:absolute;left:631px;top:626px;width:41px;height:22px;background:#f6f7f9;"></div>
<div style="position:absolute;left:634px;top:627.37px;height:20px;line-height:20px;font-size:14px;font-weight:normal;color:#000;white-space:nowrap;" >22</div>
<div style="position:absolute;left:675px;top:627.37px;height:20px;line-height:20px;font-size:14px;font-weight:normal;color:#000;white-space:nowrap;width:133px;overflow:hidden;" >+1 (407) 999-7788</div>
<div style="position:absolute;left:812px;top:627.37px;height:20px;line-height:20px;font-size:14px;font-weight:normal;color:#808080;white-space:nowrap;font-style:italic;" >(NULL)</div>
<div style="position:absolute;left:949px;top:627.37px;height:20px;line-height:20px;font-size:14px;font-weight:normal;color:#000;white-space:nowrap;width:194px;overflow:hidden;letter-spacing:0.25px;" >hleacock@gmail.com</div>
<div style="position:absolute;left:1147px;top:627.37px;height:20px;line-height:20px;font-size:14px;font-weight:normal;color:#000;white-space:nowrap;" >4</div>
<div style="position:absolute;left:1160px;top:627.37px;height:20px;line-height:20px;font-size:14px;font-weight:normal;color:#858585;white-space:nowrap;" >Park</div>
<div style="position:absolute;left:672px;top:648px;width:634px;height:22px;background:#ffffff;"></div>
<div style="position:absolute;left:631px;top:648px;width:41px;height:22px;background:#f6f7f9;"></div>
<div style="position:absolute;left:634px;top:649.37px;height:20px;line-height:20px;font-size:14px;font-weight:normal;color:#000;white-space:nowrap;" >23</div>
<div style="position:absolute;left:675px;top:649.37px;height:20px;line-height:20px;font-size:14px;font-weight:normal;color:#000;white-space:nowrap;width:133px;overflow:hidden;" >+1 (617) 522-1333</div>
<div style="position:absolute;left:812px;top:649.37px;height:20px;line-height:20px;font-size:14px;font-weight:normal;color:#808080;white-space:nowrap;font-style:italic;" >(NULL)</div>
<div style="position:absolute;left:949px;top:649.37px;height:20px;line-height:20px;font-size:14px;font-weight:normal;color:#000;white-space:nowrap;width:194px;overflow:hidden;letter-spacing:0.25px;" >johngordon22@yahoo.com</div>
<div style="position:absolute;left:1147px;top:649.37px;height:20px;line-height:20px;font-size:14px;font-weight:normal;color:#000;white-space:nowrap;" >4</div>
<div style="position:absolute;left:1160px;top:649.37px;height:20px;line-height:20px;font-size:14px;font-weight:normal;color:#858585;white-space:nowrap;" >Park</div>
<div style="position:absolute;left:672px;top:670px;width:634px;height:22px;background:#ebf5ff;"></div>
<div style="position:absolute;left:631px;top:670px;width:41px;height:22px;background:#f6f7f9;"></div>
<div style="position:absolute;left:634px;top:671.37px;height:20px;line-height:20px;font-size:14px;font-weight:normal;color:#000;white-space:nowrap;" >24</div>
<div style="position:absolute;left:675px;top:671.37px;height:20px;line-height:20px;font-size:14px;font-weight:normal;color:#000;white-space:nowrap;width:133px;overflow:hidden;" >+1 (312) 332-3232</div>
<div style="position:absolute;left:812px;top:671.37px;height:20px;line-height:20px;font-size:14px;font-weight:normal;color:#808080;white-space:nowrap;font-style:italic;" >(NULL)</div>
<div style="position:absolute;left:949px;top:671.37px;height:20px;line-height:20px;font-size:14px;font-weight:normal;color:#000;white-space:nowrap;width:194px;overflow:hidden;letter-spacing:0.25px;" >fralston@gmail.com</div>
<div style="position:absolute;left:1147px;top:671.37px;height:20px;line-height:20px;font-size:14px;font-weight:normal;color:#000;white-space:nowrap;" >3</div>
<div style="position:absolute;left:1160px;top:671.37px;height:20px;line-height:20px;font-size:14px;font-weight:normal;color:#858585;white-space:nowrap;" >Peacock</div>
<div style="position:absolute;left:672px;top:692px;width:634px;height:22px;background:#ffffff;"></div>
<div style="position:absolute;left:631px;top:692px;width:41px;height:22px;background:#f6f7f9;"></div>
<div style="position:absolute;left:634px;top:693.37px;height:20px;line-height:20px;font-size:14px;font-weight:normal;color:#000;white-space:nowrap;" >25</div>
<div style="position:absolute;left:675px;top:693.37px;height:20px;line-height:20px;font-size:14px;font-weight:normal;color:#000;white-space:nowrap;width:133px;overflow:hidden;" >+1 (608) 257-0597</div>
<div style="position:absolute;left:812px;top:693.37px;height:20px;line-height:20px;font-size:14px;font-weight:normal;color:#808080;white-space:nowrap;font-style:italic;" >(NULL)</div>
<div style="position:absolute;left:949px;top:693.37px;height:20px;line-height:20px;font-size:14px;font-weight:normal;color:#000;white-space:nowrap;width:194px;overflow:hidden;letter-spacing:0.25px;" >vstevens@yahoo.com</div>
<div style="position:absolute;left:1147px;top:693.37px;height:20px;line-height:20px;font-size:14px;font-weight:normal;color:#000;white-space:nowrap;" >5</div>
<div style="position:absolute;left:1160px;top:693.37px;height:20px;line-height:20px;font-size:14px;font-weight:normal;color:#858585;white-space:nowrap;" >Johnson</div>
<div style="position:absolute;left:672px;top:714px;width:634px;height:22px;background:#ffffff;"></div>
<div style="position:absolute;left:631px;top:714px;width:41px;height:22px;background:#f6f7f9;"></div>
<div style="position:absolute;left:634px;top:715.37px;height:20px;line-height:20px;font-size:14px;font-weight:normal;color:#000;white-space:nowrap;" >26</div>
<div style="position:absolute;left:675px;top:715.37px;height:20px;line-height:20px;font-size:14px;font-weight:normal;color:#000;white-space:nowrap;width:133px;overflow:hidden;" >+1 (817) 924-7272</div>
<div style="position:absolute;left:812px;top:715.37px;height:20px;line-height:20px;font-size:14px;font-weight:normal;color:#808080;white-space:nowrap;font-style:italic;" >(NULL)</div>
<div style="position:absolute;left:949px;top:715.37px;height:20px;line-height:20px;font-size:14px;font-weight:normal;color:#000;white-space:nowrap;width:194px;overflow:hidden;letter-spacing:0.25px;" >ricunningham@hotmail.com</div>
<div style="position:absolute;left:1147px;top:715.37px;height:20px;line-height:20px;font-size:14px;font-weight:normal;color:#000;white-space:nowrap;" >4</div>
<div style="position:absolute;left:1160px;top:715.37px;height:20px;line-height:20px;font-size:14px;font-weight:normal;color:#858585;white-space:nowrap;" >Park</div>
<div style="position:absolute;left:672px;top:736px;width:634px;height:22px;background:#ebebeb;"></div>
<div style="position:absolute;left:631px;top:736px;width:41px;height:22px;background:#f6f7f9;"></div>
<div style="position:absolute;left:634px;top:737.37px;height:20px;line-height:20px;font-size:14px;font-weight:normal;color:#000;white-space:nowrap;" >27</div>
<div style="position:absolute;left:675px;top:737.37px;height:20px;line-height:20px;font-size:14px;font-weight:normal;color:#000;white-space:nowrap;width:133px;overflow:hidden;" >+1 (520) 622-4200</div>
<div style="position:absolute;left:812px;top:737.37px;height:20px;line-height:20px;font-size:14px;font-weight:normal;color:#808080;white-space:nowrap;font-style:italic;" >(NULL)</div>
<div style="position:absolute;left:949px;top:737.37px;height:20px;line-height:20px;font-size:14px;font-weight:normal;color:#000;white-space:nowrap;width:194px;overflow:hidden;letter-spacing:0.25px;" >patrick.gray@aol.com</div>
<div style="position:absolute;left:1147px;top:737.37px;height:20px;line-height:20px;font-size:14px;font-weight:normal;color:#000;white-space:nowrap;" >4</div>
<div style="position:absolute;left:1160px;top:737.37px;height:20px;line-height:20px;font-size:14px;font-weight:normal;color:#858585;white-space:nowrap;" >Park</div>
<div style="position:absolute;left:672px;top:758px;width:634px;height:22px;background:#ffffff;"></div>
<div style="position:absolute;left:631px;top:758px;width:41px;height:22px;background:#f6f7f9;"></div>
<div style="position:absolute;left:634px;top:759.37px;height:20px;line-height:20px;font-size:14px;font-weight:normal;color:#000;white-space:nowrap;" >28</div>
<div style="position:absolute;left:675px;top:759.37px;height:20px;line-height:20px;font-size:14px;font-weight:normal;color:#000;white-space:nowrap;width:133px;overflow:hidden;" >+1 (801) 531-7272</div>
<div style="position:absolute;left:812px;top:759.37px;height:20px;line-height:20px;font-size:14px;font-weight:normal;color:#808080;white-space:nowrap;font-style:italic;" >(NULL)</div>
<div style="position:absolute;left:949px;top:759.37px;height:20px;line-height:20px;font-size:14px;font-weight:normal;color:#000;white-space:nowrap;width:194px;overflow:hidden;letter-spacing:0.25px;" >jubarnett@gmail.com</div>
<div style="position:absolute;left:1147px;top:759.37px;height:20px;line-height:20px;font-size:14px;font-weight:normal;color:#000;white-space:nowrap;" >5</div>
<div style="position:absolute;left:1160px;top:759.37px;height:20px;line-height:20px;font-size:14px;font-weight:normal;color:#858585;white-space:nowrap;" >Johnson</div>
<div style="position:absolute;left:672px;top:780px;width:634px;height:22px;background:#ffffff;"></div>
<div style="position:absolute;left:631px;top:780px;width:41px;height:22px;background:#f6f7f9;"></div>
<div style="position:absolute;left:634px;top:781.37px;height:20px;line-height:20px;font-size:14px;font-weight:normal;color:#000;white-space:nowrap;" >29</div>
<div style="position:absolute;left:675px;top:781.37px;height:20px;line-height:20px;font-size:14px;font-weight:normal;color:#000;white-space:nowrap;width:133px;overflow:hidden;" >+1 (416) 363-8888</div>
<div style="position:absolute;left:812px;top:781.37px;height:20px;line-height:20px;font-size:14px;font-weight:normal;color:#808080;white-space:nowrap;font-style:italic;" >(NULL)</div>
<div style="position:absolute;left:949px;top:781.37px;height:20px;line-height:20px;font-size:14px;font-weight:normal;color:#000;white-space:nowrap;width:194px;overflow:hidden;letter-spacing:0.25px;" >robbrown@shaw.ca</div>
<div style="position:absolute;left:1147px;top:781.37px;height:20px;line-height:20px;font-size:14px;font-weight:normal;color:#000;white-space:nowrap;" >3</div>
<div style="position:absolute;left:1160px;top:781.37px;height:20px;line-height:20px;font-size:14px;font-weight:normal;color:#858585;white-space:nowrap;" >Peacock</div>
<div style="position:absolute;left:631px;top:120px;width:676px;height:1px;background:#c0c0c0;"></div>
<div style="position:absolute;left:631px;top:142px;width:676px;height:1px;background:#c0c0c0;"></div>
<div style="position:absolute;left:631px;top:164px;width:676px;height:1px;background:#c0c0c0;"></div>
<div style="position:absolute;left:631px;top:186px;width:676px;height:1px;background:#c0c0c0;"></div>
<div style="position:absolute;left:631px;top:208px;width:676px;height:1px;background:#c0c0c0;"></div>
<div style="position:absolute;left:631px;top:230px;width:676px;height:1px;background:#c0c0c0;"></div>
<div style="position:absolute;left:631px;top:252px;width:676px;height:1px;background:#c0c0c0;"></div>
<div style="position:absolute;left:631px;top:274px;width:676px;height:1px;background:#c0c0c0;"></div>
<div style="position:absolute;left:631px;top:296px;width:676px;height:1px;background:#c0c0c0;"></div>
<div style="position:absolute;left:631px;top:318px;width:676px;height:1px;background:#c0c0c0;"></div>
<div style="position:absolute;left:631px;top:340px;width:676px;height:1px;background:#c0c0c0;"></div>
<div style="position:absolute;left:631px;top:362px;width:676px;height:1px;background:#c0c0c0;"></div>
<div style="position:absolute;left:631px;top:384px;width:676px;height:1px;background:#c0c0c0;"></div>
<div style="position:absolute;left:631px;top:406px;width:676px;height:1px;background:#c0c0c0;"></div>
<div style="position:absolute;left:631px;top:428px;width:676px;height:1px;background:#c0c0c0;"></div>
<div style="position:absolute;left:631px;top:450px;width:676px;height:1px;background:#c0c0c0;"></div>
<div style="position:absolute;left:631px;top:472px;width:676px;height:1px;background:#c0c0c0;"></div>
<div style="position:absolute;left:631px;top:494px;width:676px;height:1px;background:#c0c0c0;"></div>
<div style="position:absolute;left:631px;top:516px;width:676px;height:1px;background:#c0c0c0;"></div>
<div style="position:absolute;left:631px;top:538px;width:676px;height:1px;background:#c0c0c0;"></div>
<div style="position:absolute;left:631px;top:560px;width:676px;height:1px;background:#c0c0c0;"></div>
<div style="position:absolute;left:631px;top:582px;width:676px;height:1px;background:#c0c0c0;"></div>
<div style="position:absolute;left:631px;top:604px;width:676px;height:1px;background:#c0c0c0;"></div>
<div style="position:absolute;left:631px;top:626px;width:676px;height:1px;background:#c0c0c0;"></div>
<div style="position:absolute;left:631px;top:648px;width:676px;height:1px;background:#c0c0c0;"></div>
<div style="position:absolute;left:631px;top:670px;width:676px;height:1px;background:#c0c0c0;"></div>
<div style="position:absolute;left:631px;top:692px;width:676px;height:1px;background:#c0c0c0;"></div>
<div style="position:absolute;left:631px;top:714px;width:676px;height:1px;background:#c0c0c0;"></div>
<div style="position:absolute;left:631px;top:736px;width:676px;height:1px;background:#c0c0c0;"></div>
<div style="position:absolute;left:631px;top:758px;width:676px;height:1px;background:#c0c0c0;"></div>
<div style="position:absolute;left:631px;top:780px;width:676px;height:1px;background:#c0c0c0;"></div>
<div style="position:absolute;left:631px;top:802px;width:676px;height:1px;background:#c0c0c0;"></div>
<div style="position:absolute;left:631px;top:120px;width:1px;height:680px;background:#c0c0c0;"></div>
<div style="position:absolute;left:672px;top:120px;width:1px;height:680px;background:#c0c0c0;"></div>
<div style="position:absolute;left:809px;top:120px;width:1px;height:680px;background:#c0c0c0;"></div>
<div style="position:absolute;left:946px;top:120px;width:1px;height:680px;background:#c0c0c0;"></div>
<div style="position:absolute;left:1144px;top:120px;width:1px;height:680px;background:#c0c0c0;"></div>
<div style="position:absolute;left:1306px;top:120px;width:1px;height:680px;background:#c0c0c0;"></div>
</div>
<div style="position:absolute;left:1366px;top:120px;width:15px;height:665px;background:#f0f0f0;"></div>
<div style="position:absolute;left:1368px;top:135px;width:11px;height:312px;background:#c1c1c1;"></div>
<div style="position:absolute;left:1369px;top:125px;width:0px;height:0px;border-left:4px solid transparent;border-right:4px solid transparent;border-bottom:4px solid #a3a3a3;"></div>
<div style="position:absolute;left:1369px;top:774px;width:0px;height:0px;border-left:4px solid transparent;border-right:4px solid transparent;border-top:4px solid #505050;"></div>
<div style="position:absolute;left:631px;top:785px;width:735px;height:15px;background:#f0f0f0;"></div>
<div style="position:absolute;left:975px;top:787px;width:224px;height:11px;background:#c1c1c1;"></div>
<div style="position:absolute;left:1366px;top:785px;width:15px;height:15px;background:#dcdcdc;"></div>
<div style="position:absolute;left:636px;top:788px;width:0px;height:0px;border-top:4px solid transparent;border-bottom:4px solid transparent;border-right:4px solid #505050;"></div>
<div style="position:absolute;left:1357px;top:788px;width:0px;height:0px;border-top:4px solid transparent;border-bottom:4px solid transparent;border-left:4px solid #505050;"></div>
<div style="position:absolute;left:4px;top:800px;width:1377px;height:20px;background:#1800c8;"></div>
<svg width="13" height="14" viewBox="0 0 13 14" style="position:absolute;left:14px;top:803px"><ellipse cx="6.5" cy="2.6" rx="6.2" ry="2.4" fill="#fff"/><path d="M0.3 4.3 Q6.5 7.5 12.7 4.3 L12.7 7 Q6.5 10 0.3 7 Z" fill="#fff"/><path d="M0.3 8.7 Q6.5 12 12.7 8.7 L12.7 11.5 Q12.7 14 6.5 14 Q0.3 14 0.3 11.5 Z" fill="#fff"/></svg>
<div style="position:absolute;left:30px;top:800.37px;height:20px;line-height:20px;font-size:14px;font-weight:normal;color:#fff;white-space:nowrap;" >Chinook</div>
<svg width="12" height="12" viewBox="0 0 16 16" style="position:absolute;left:102px;top:803px"><path d="M0 2.2 L7 1.4 L7 7.4 L0 7.4 Z" fill="#e8504e"/><path d="M8 1.3 L16 0 L16 7.4 L8 7.4 Z" fill="#39b39a"/><path d="M0 8.4 L7 8.4 L7 14.4 L0 13.6 Z" fill="#2ea3db"/><path d="M8 8.4 L16 8.4 L16 16 L8 14.6 Z" fill="#f3b15a"/></svg>
<div style="position:absolute;left:117px;top:800.51px;height:20px;line-height:20px;font-size:13.6px;font-weight:normal;color:#fff;white-space:nowrap;" >MS SQL local</div>
<svg width="14" height="14" viewBox="0 0 14 14" style="position:absolute;left:217px;top:803px"><circle cx="7" cy="3.6" r="3.4" fill="#fff"/><path d="M0.5 14 Q0.5 7.6 7 7.6 Q13.5 7.6 13.5 14 Z" fill="#fff"/></svg>
<div style="position:absolute;left:234px;top:800.37px;height:20px;line-height:20px;font-size:14px;font-weight:normal;color:#fff;white-space:nowrap;" >sa</div>
</body></html>
